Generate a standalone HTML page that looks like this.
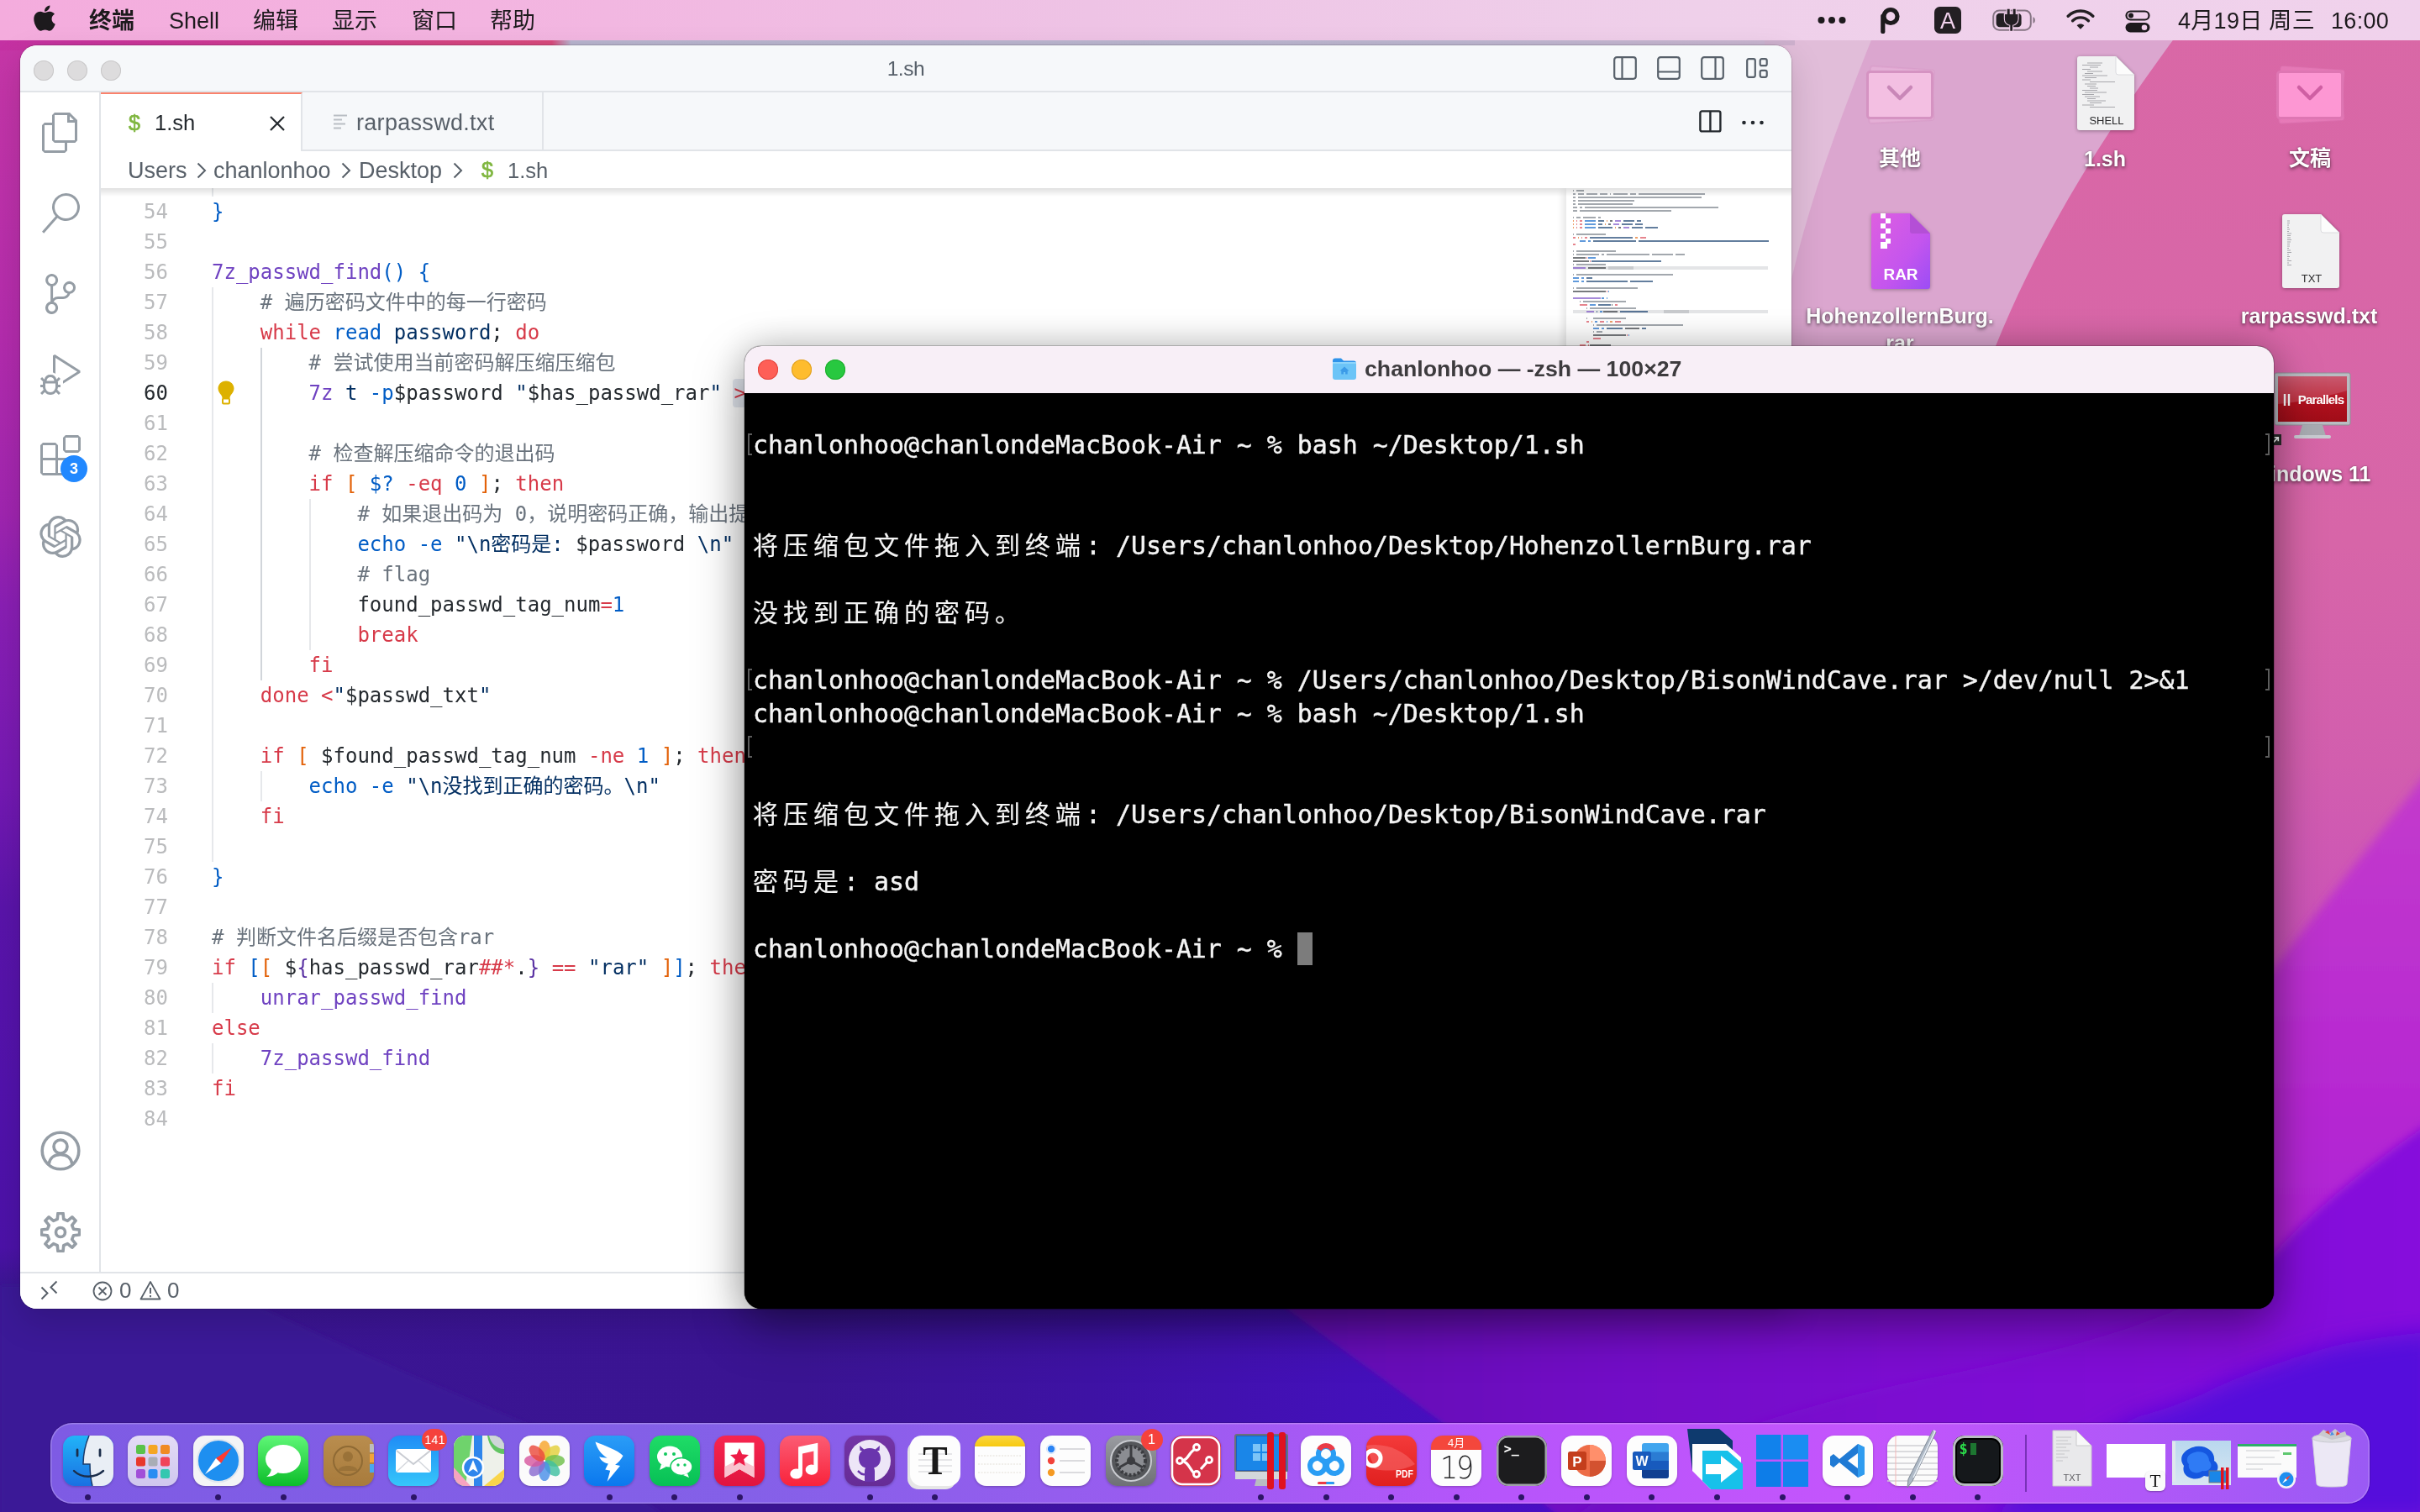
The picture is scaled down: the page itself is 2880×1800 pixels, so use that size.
<!DOCTYPE html>
<html lang="zh-CN"><head><meta charset="utf-8"><title>desktop</title>
<style>
*{box-sizing:border-box;margin:0;padding:0}
html,body{width:2880px;height:1800px;overflow:hidden;background:#3a1590}
body{position:relative;font-family:"Liberation Sans","Noto Sans CJK SC",sans-serif;-webkit-font-smoothing:antialiased}
i{font-style:normal}
#menubar,#desk,#vsc,#term,#dock{will-change:transform}

#menubar{position:absolute;left:0;top:0;width:2880px;height:48px;background:linear-gradient(90deg,#f4acdd 0%,#f3b4e0 20%,#eec3e5 45%,#efd0ea 70%,#f0d2ec 100%);}
#menubar .mi{position:absolute;top:0;height:48px;line-height:50px;font-size:27px;color:#1d1a1d;white-space:nowrap;font-family:"Liberation Sans","Noto Sans CJK SC",sans-serif}
#menubar .mi.b{font-weight:bold}

#vsc{position:absolute;left:24px;top:54px;width:2108px;height:1504px;border-radius:20px;background:#fff;overflow:hidden;box-shadow:0 0 0 1px rgba(0,0,0,.14),0 16px 40px rgba(0,0,0,.15),0 0 8px rgba(0,0,0,.05);font-family:"Liberation Sans","Noto Sans CJK SC",sans-serif}
#vsc .tbar{position:absolute;left:0;top:0;width:100%;height:56px;background:#f6f8fa;border-bottom:2px solid #e1e4e8}
#vsc .tl{position:absolute;top:18px;width:24px;height:24px;border-radius:12px;background:#dddcdd;box-shadow:inset 0 0 0 1px #c9c8c9}
#vsc .ttl{position:absolute;left:0;width:100%;text-align:center;top:0;line-height:55px;font-size:24.500px;letter-spacing:-.4px;color:#57606a}
#vsc .abar{position:absolute;left:0;top:56px;width:96px;height:1404px;background:#fff;border-right:2px solid #e1e4e8}
#vsc .badge{position:absolute;left:48px;top:432px;width:32px;height:32px;border-radius:16px;background:#2188ff;color:#fff;font-size:18px;font-weight:bold;text-align:center;line-height:32px}
#vsc .tabs{position:absolute;left:96px;top:56px;width:2012px;height:70px;background:#f6f8fa;border-bottom:2px solid #e1e4e8}
#vsc .tab{position:absolute;top:0;height:70px;border-right:2px solid #e1e4e8;border-bottom:2px solid #e1e4e8}
#vsc .tab.act{background:#fff;border-top:2px solid #f9826c;border-bottom:0}
#vsc .tn{position:absolute;top:1px;line-height:70px;font-size:27px;white-space:nowrap}
#vsc .tab.act .tn{top:-1px}
#vsc .sh{position:absolute;font-size:25px;font-weight:normal;-webkit-text-stroke:.7px #7fb63f;color:#7fb63f;line-height:34px;font-family:"Liberation Sans",sans-serif}
#vsc .bc{position:absolute;left:96px;top:126px;width:2012px;height:44px;background:#fff}
#vsc .bt{position:absolute;top:1px;line-height:45px;font-size:27px;color:#586069;white-space:nowrap}
#vsc .ed{position:absolute;left:0px;top:170px;width:2108px;height:1290px;overflow:hidden;background:transparent}
#vsc .ed .ln{position:absolute;left:0;width:2108px;height:36px;line-height:36px;font-family:"DejaVu Sans Mono","Noto Sans CJK SC",monospace;font-size:24px;white-space:pre}
#vsc .ed .ln{margin-top:-170px}
#vsc .num{position:absolute;left:96px;width:80px;text-align:right;color:#babbbd}
#vsc .num.cur{color:#24292e}
#vsc .code{position:absolute;left:228px;top:0;letter-spacing:0px}
#vsc .ig{position:absolute;top:0;width:2px;height:36px}
#vsc .edsh{position:absolute;left:96px;top:0;width:2012px;height:10px;background:linear-gradient(rgba(0,0,0,.12),rgba(0,0,0,0))}
#mini{position:absolute;left:1840px;top:0;width:244px;height:1290px;background:#fff;box-shadow:-6px 0 8px -2px rgba(0,0,0,.10)}
#mini i{position:absolute;display:block}
#mini .mm{position:absolute;left:0;top:0;width:244px;height:200px;filter:blur(.7px)}
#vsc .sbar{position:absolute;left:0;top:1460px;width:2108px;height:44px;background:#fff;border-top:2px solid #e1e4e8}
#vsc .st{position:absolute;top:0;line-height:41px;font-size:26px;color:#586069}

#term{position:absolute;left:886px;top:412px;width:1820px;height:1146px;border-radius:20px;background:#000;overflow:hidden;box-shadow:0 0 0 1px rgba(0,0,0,.20),0 22px 60px rgba(0,0,0,.34),0 0 44px rgba(0,0,0,.20);}
#term .tt{position:absolute;left:0;top:0;width:100%;height:56px;background:#f8eff7;font-family:"Liberation Sans",sans-serif}
#term .tl{position:absolute;top:16px;width:24px;height:24px;border-radius:12px}
#term .ttl{position:absolute;left:738px;top:0;line-height:55px;font-size:26.700px;font-weight:bold;color:#3d3b3e;white-space:nowrap}
#term .tb{position:absolute;left:0;top:56px;width:100%;height:1090px;background:#000}
#term .l{position:absolute;left:10px;height:40px;line-height:40px;font-family:"DejaVu Sans Mono","Noto Sans CJK SC",monospace;font-size:29.900px;color:#f4f4f4;white-space:pre;-webkit-text-stroke:.4px #f4f4f4}
#term .l b{-webkit-text-stroke:.15px #f4f4f4;font-weight:normal;display:inline-block;width:36px;text-align:left;font-size:30px}
#term .br{position:absolute;width:5px;height:26px;display:block}
#term .cur{position:absolute;width:18px;height:39px;background:#7c7c7c;display:block}

#dock{position:absolute;left:60px;top:1694px;width:2760px;height:96px;border-radius:26px;background:linear-gradient(90deg,#7e5be4 0%,#8460e8 30%,#9a5cf0 48%,#b655fb 62%,#c455fc 78%,#b058f8 90%,#9a5af4 100%);box-shadow:inset 0 0 0 1.500px rgba(255,255,255,.22),0 0 0 1px rgba(40,10,90,.25)}
#dock .dslot{position:absolute;top:15px;width:60px;height:60px}
#dock .di{position:absolute;left:0;top:0;width:60px;height:60px;border-radius:14px;overflow:hidden;box-shadow:0 1px 3px rgba(0,0,0,.25)}
#dock .di svg{position:absolute;left:0;top:0}
#dock .dot{position:absolute;top:85px;width:7px;height:7px;border-radius:4px;background:#2c1566;display:block}
#dock .sep{position:absolute;top:14px;width:2px;height:68px;background:rgba(70,20,130,.55);display:block}
#dock .bdg{position:absolute;top:-8px;height:26px;border-radius:13px;background:#f5423c;color:#fff;font-size:16px;line-height:26px;text-align:center;font-family:"Liberation Sans",sans-serif;z-index:3}

#desk .dl{position:absolute;text-align:center;font-size:25px;line-height:32px;font-weight:bold;color:#fff;text-shadow:0 2px 4px rgba(0,0,0,.55),0 0 2px rgba(0,0,0,.35);font-family:"Liberation Sans","Noto Sans CJK SC",sans-serif;white-space:nowrap}
</style></head>
<body>

<svg id="wall" width="2880" height="1800" viewBox="0 0 2880 1800" style="position:absolute;left:0;top:0">
<defs>
<filter id="b6" x="-10%" y="-10%" width="120%" height="120%"><feGaussianBlur stdDeviation="6"/></filter>
<filter id="b14" x="-10%" y="-10%" width="120%" height="120%"><feGaussianBlur stdDeviation="14"/></filter>
<filter id="b3" x="-10%" y="-10%" width="120%" height="120%"><feGaussianBlur stdDeviation="2.500"/></filter>
<linearGradient id="wbase" x1="0" y1="0" x2="0" y2="1">
<stop offset="0" stop-color="#c938a6"/>
<stop offset="0.22" stop-color="#b42cad"/>
<stop offset="0.34" stop-color="#a025b0"/>
<stop offset="0.40" stop-color="#8a1fb4"/>
<stop offset="0.52" stop-color="#7519b3"/>
<stop offset="0.60" stop-color="#5a14aa"/>
<stop offset="0.72" stop-color="#5212ac"/>
<stop offset="0.825" stop-color="#4c12a8"/>
<stop offset="0.85" stop-color="#3c1594"/>
<stop offset="1" stop-color="#3a1592"/>
</linearGradient>
<linearGradient id="wpink" x1="0" y1="0" x2="0" y2="1">
<stop offset="0" stop-color="#d968a6"/>
<stop offset="0.5" stop-color="#d765a8"/>
<stop offset="0.7" stop-color="#d25eae"/>
<stop offset="0.85" stop-color="#cc54b8"/>
<stop offset="1" stop-color="#c448c4"/>
</linearGradient>
<linearGradient id="wmag" x1="0" y1="0" x2="0" y2="1">
<stop offset="0" stop-color="#c43ccb"/>
<stop offset="0.5" stop-color="#b628d2"/>
<stop offset="1" stop-color="#a41cd8"/>
</linearGradient>
<linearGradient id="wbot" x1="0" y1="0" x2="1" y2="0">
<stop offset="0" stop-color="#3b1593"/>
<stop offset="0.33" stop-color="#3a1492"/>
<stop offset="0.45" stop-color="#3e12a4"/>
<stop offset="0.56" stop-color="#4410ba"/>
<stop offset="0.66" stop-color="#4a0ec6"/>
<stop offset="1" stop-color="#4a0ec6"/>
</linearGradient>
<linearGradient id="wpur" gradientUnits="userSpaceOnUse" x1="1500" y1="0" x2="2880" y2="0">
<stop offset="0" stop-color="#600fb0"/>
<stop offset="0.3" stop-color="#720ec6"/>
<stop offset="0.6" stop-color="#7d0fd3"/>
<stop offset="1" stop-color="#8611dc"/>
</linearGradient>
<linearGradient id="wbotv" x1="0" y1="0" x2="0" y2="1">
<stop offset="0" stop-color="#000" stop-opacity=".18"/>
<stop offset="0.5" stop-color="#000" stop-opacity="0"/>
<stop offset="1" stop-color="#fff" stop-opacity=".04"/>
</linearGradient>
<linearGradient id="wtop" x1="0" y1="0" x2="1" y2="0">
<stop offset="0" stop-color="#c431a3"/>
<stop offset="0.10" stop-color="#cf3b92"/>
<stop offset="0.20" stop-color="#d6467f"/>
<stop offset="0.228" stop-color="#d84a7c"/>
<stop offset="0.236" stop-color="#b8b4ce"/>
<stop offset="0.6" stop-color="#bdb6d0"/>
<stop offset="0.74" stop-color="#c9b4d0"/>
<stop offset="1" stop-color="#d9a8cf"/>
</linearGradient>
</defs>
<rect width="2880" height="1800" fill="url(#wbase)"/>
<rect x="0" y="0" width="2880" height="60" fill="url(#wtop)"/>
<!-- right side -->
<rect x="2100" y="0" width="780" height="1300" fill="url(#wpink)"/>
<path d="M2100 0 H2622 C2545 100 2440 250 2375 412 L2330 560 H2100 Z" fill="#dba6cf"/>
<path d="M2100 0 H2246 C2206 100 2166 200 2140 300 L2110 420 H2100 Z" fill="#e1bdd9"/>
<rect x="2100" y="46" width="36" height="8" fill="#cdb0cd"/>
<g filter="url(#b6)">
<path d="M2900 905 L2700 1160 L2560 1330 V1700 H2900 Z" fill="url(#wmag)"/>
</g>
<!-- bottom strip -->
<rect x="0" y="1530" width="2880" height="270" fill="url(#wbot)"/>
<g filter="url(#b3)">
<path d="M0 1530 H256 C400 1600 520 1650 640 1700 L800 1810 H0 Z" fill="#3d1898" fill-opacity=".7"/>
<path d="M1490 1525 H2890 V1810 H1862 L1716 1693 L1533 1559 Z" fill="url(#wpur)"/>
</g>
<g filter="url(#b6)">
<path d="M2890 1338 C2800 1400 2740 1455 2705 1494 C2620 1560 2500 1600 2300 1640 C2100 1680 1950 1740 1870 1810 H2890 Z" fill="url(#wpur)"/>
</g>
<g filter="url(#b14)">
<path d="M2900 1584 C2830 1592 2790 1598 2764 1606 C2700 1625 2660 1640 2618 1661 C2590 1672 2570 1680 2545 1686 C2480 1720 2420 1760 2360 1810 H2900 Z" fill="#5409dc"/>
</g>
</svg>
<div id="menubar"><svg style="position:absolute;left:40px;top:5px" width="26" height="33" viewBox="0 20 384 470"><path fill="#1d1a1d" d="M318.7 268.7c-.2-36.7 16.4-64.4 50-84.8-18.8-26.900-47.200-41.700-84.700-44.600-35.500-2.800-74.300 20.700-88.500 20.700-15 0-49.400-19.700-76.400-19.700C63.300 141.200 4 184.800 4 273.500q0 39.300 14.400 81.200c12.800 36.700 59 126.700 107.200 125.200 25.200-.6 43-17.900 75.800-17.900 31.800 0 48.300 17.900 76.400 17.900 48.600-.7 90.400-82.500 102.600-119.300-65.200-30.700-61.700-90-61.700-91.900zm-56.600-164.200c27.300-32.400 24.800-61.900 24-72.500-24.100 1.400-52 16.400-67.900 34.900-17.500 19.800-27.800 44.300-25.600 71.900 26.100 2 49.900-11.400 69.500-34.300z"/></svg><span class="mi b" style="left:106px">终端</span><span class="mi" style="left:201px">Shell</span><span class="mi" style="left:301px">编辑</span><span class="mi" style="left:395px">显示</span><span class="mi" style="left:490px">窗口</span><span class="mi" style="left:583px">帮助</span><svg style="position:absolute;left:2162px;top:18px" width="36" height="12" viewBox="0 0 36 12"><circle cx="5.500" cy="6" r="4" fill="#1d1a1d"/><circle cx="18" cy="6" r="4" fill="#1d1a1d"/><circle cx="30.500" cy="6" r="4" fill="#1d1a1d"/></svg><svg style="position:absolute;left:2236px;top:7px" width="28" height="34" viewBox="0 0 28 34"><circle cx="14" cy="12.500" r="8" fill="none" stroke="#1d1a1d" stroke-width="5.200"/><path d="M4.800 12 V30.500" stroke="#1d1a1d" stroke-width="5.200" stroke-linecap="round" fill="none"/></svg><div style="position:absolute;left:2302px;top:8px;width:32px;height:32px;border-radius:6.500px;background:#231f23;color:#f3d3ee;font-size:27px;line-height:34px;text-align:center;font-family:'Liberation Sans',sans-serif">A</div><svg style="position:absolute;left:2371px;top:9px" width="56" height="30" viewBox="0 0 56 30">
<rect x="1.200" y="3.400" width="44.600" height="23.300" rx="7" fill="none" stroke="#1d1a1d" stroke-opacity=".5" stroke-width="2"/>
<path d="M48.500 11.200 c3.200 1 3.200 6.600 0 7.600z" fill="#1d1a1d" fill-opacity=".5"/>
<rect x="4.600" y="6.800" width="30" height="16.500" rx="4.200" fill="#231f23"/>
<path d="M17.700 1.800 h3 v6.200 h4 v-6.200 h3 v6.200 h2.800 v5.500 c0 4.200 -3 6.800 -6.400 7.200 v7 h-2.800 v-7 c-3.400 -.4 -6.400 -3 -6.400 -7.200 v-5.500 h2.800z" fill="#231f23" stroke="#f1cfea" stroke-width="2.200" paint-order="stroke"/>
</svg><svg style="position:absolute;left:2459px;top:10px" width="34" height="26" viewBox="0 0 34 26">
<path d="M2.200 9.200 C10.400 1 23.600 1 31.800 9.200" fill="none" stroke="#231f23" stroke-width="3.400" stroke-linecap="round"/>
<path d="M7.600 14.800 C12.800 9.600 21.200 9.600 26.400 14.800" fill="none" stroke="#231f23" stroke-width="3.400" stroke-linecap="round"/>
<path d="M12.600 20.200 C15 17.800 19 17.800 21.400 20.200 L17 24.800 Z" fill="#231f23"/>
</svg><svg style="position:absolute;left:2529px;top:12px" width="30" height="27" viewBox="0 0 30 27">
<rect x="1.500" y="1.500" width="27" height="10" rx="5" fill="none" stroke="#1d1a1d" stroke-width="2.200"/>
<circle cx="7" cy="6.500" r="3" fill="#1d1a1d"/>
<rect x="0.500" y="15" width="29" height="11.500" rx="5.750" fill="#1d1a1d"/>
<circle cx="23" cy="20.750" r="3.300" fill="#f1cfea"/>
</svg><span class="mi" style="left:2592px;letter-spacing:0.3px">4月19日 周三</span><span class="mi" style="left:2774px;letter-spacing:0.3px">16:00</span></div>
<div id="desk"><svg style="position:absolute;left:2215px;top:76px" width="92" height="80" viewBox="-6 -8 92 80">
<rect x="3" y="-3" width="76" height="56" rx="3" fill="#f3bfe2" fill-opacity=".35" stroke="#d593c2" stroke-opacity=".35" stroke-width="2" transform="rotate(4 40 28)"/>
<rect x="2" y="4" width="77" height="57" rx="3" fill="#f3bfe2" fill-opacity=".4" stroke="#d593c2" stroke-opacity=".4" stroke-width="2" transform="rotate(-3 40 30)"/>
<rect x="1.500" y="1.500" width="77" height="55" rx="3" fill="#f3bfe2" stroke="#d593c2" stroke-width="3"/>
<path d="M27 20L40 33L53 20" fill="none" stroke="#c987b8" stroke-width="4.500" stroke-linecap="round" stroke-linejoin="round"/></svg><div class="dl" style="left:2111.0px;top:172px;width:300px">其他</div><svg style="position:absolute;left:2703px;top:76px" width="92" height="80" viewBox="-6 -8 92 80">
<rect x="3" y="-3" width="76" height="56" rx="3" fill="#fd97d3" fill-opacity=".35" stroke="#de76b3" stroke-opacity=".35" stroke-width="2" transform="rotate(4 40 28)"/>
<rect x="2" y="4" width="77" height="57" rx="3" fill="#fd97d3" fill-opacity=".4" stroke="#de76b3" stroke-opacity=".4" stroke-width="2" transform="rotate(-3 40 30)"/>
<rect x="1.500" y="1.500" width="77" height="55" rx="3" fill="#fd97d3" stroke="#de76b3" stroke-width="3"/>
<path d="M27 20L40 33L53 20" fill="none" stroke="#cf5fa3" stroke-width="4.500" stroke-linecap="round" stroke-linejoin="round"/></svg><div class="dl" style="left:2599.0px;top:172px;width:300px">文稿</div><svg style="position:absolute;left:2472.0px;top:67px;filter:drop-shadow(0 1px 2px rgba(0,0,0,.35))" width="68" height="88" viewBox="0 0 68 88">
<path d="M3 0H46L68 22V85A3 3 0 0 1 65 88H3A3 3 0 0 1 0 85V3A3 3 0 0 1 3 0Z" fill="#f1f1f2"/>
<path d="M46 0L68 22H49A3 3 0 0 1 46 19Z" fill="#fcfcfc" stroke="#d4d4d8" stroke-width=".8"/>
<path d="M12 8H30" stroke="#77777d" stroke-width="1" stroke-opacity=".6"/><path d="M6 10.5H28" stroke="#77777d" stroke-width="1" stroke-opacity=".6"/><path d="M15 13.0H25" stroke="#77777d" stroke-width="1" stroke-opacity=".6"/><path d="M6 15.5H16" stroke="#77777d" stroke-width="1" stroke-opacity=".6"/><path d="M12 18.0H30" stroke="#77777d" stroke-width="1" stroke-opacity=".6"/><path d="M9 20.5H19" stroke="#77777d" stroke-width="1" stroke-opacity=".6"/><path d="M6 23.0H36" stroke="#77777d" stroke-width="1" stroke-opacity=".6"/><path d="M9 25.5H23" stroke="#77777d" stroke-width="1" stroke-opacity=".6"/><path d="M6 28.0H16" stroke="#77777d" stroke-width="1" stroke-opacity=".6"/><path d="M15 30.5H45" stroke="#77777d" stroke-width="1" stroke-opacity=".6"/><path d="M9 33.0H23" stroke="#77777d" stroke-width="1" stroke-opacity=".6"/><path d="M12 35.5H22" stroke="#77777d" stroke-width="1" stroke-opacity=".6"/><path d="M15 38.0H25" stroke="#77777d" stroke-width="1" stroke-opacity=".6"/><path d="M6 40.5H24" stroke="#77777d" stroke-width="1" stroke-opacity=".6"/><path d="M9 43.0H35" stroke="#77777d" stroke-width="1" stroke-opacity=".6"/><path d="M6 45.5H20" stroke="#77777d" stroke-width="1" stroke-opacity=".6"/><path d="M9 48.0H27" stroke="#77777d" stroke-width="1" stroke-opacity=".6"/><path d="M12 50.5H22" stroke="#77777d" stroke-width="1" stroke-opacity=".6"/><path d="M12 53.0H34" stroke="#77777d" stroke-width="1" stroke-opacity=".6"/><path d="M15 55.5H29" stroke="#77777d" stroke-width="1" stroke-opacity=".6"/><path d="M6 58.0H20" stroke="#77777d" stroke-width="1" stroke-opacity=".6"/><path d="M15 60.5H45" stroke="#77777d" stroke-width="1" stroke-opacity=".6"/>
<text x="35.0" y="81" font-size="13" fill="#2a2a2c" text-anchor="middle" font-family="Liberation Sans,sans-serif">SHELL</text></svg><div class="dl" style="left:2355.0px;top:173px;width:300px">1.sh</div><svg style="position:absolute;left:2716.0px;top:255px;filter:drop-shadow(0 1px 2px rgba(0,0,0,.35))" width="68" height="88" viewBox="0 0 68 88">
<path d="M3 0H46L68 22V85A3 3 0 0 1 65 88H3A3 3 0 0 1 0 85V3A3 3 0 0 1 3 0Z" fill="#f1f1f2"/>
<path d="M46 0L68 22H49A3 3 0 0 1 46 19Z" fill="#fcfcfc" stroke="#d4d4d8" stroke-width=".8"/>
<path d="M6 8H9" stroke="#77777d" stroke-width="1" stroke-opacity=".6"/><path d="M6 10.5H9" stroke="#77777d" stroke-width="1" stroke-opacity=".6"/><path d="M6 13.0H8" stroke="#77777d" stroke-width="1" stroke-opacity=".6"/><path d="M6 15.5H8" stroke="#77777d" stroke-width="1" stroke-opacity=".6"/><path d="M6 18.0H9" stroke="#77777d" stroke-width="1" stroke-opacity=".6"/><path d="M6 20.5H8" stroke="#77777d" stroke-width="1" stroke-opacity=".6"/><path d="M6 23.0H11" stroke="#77777d" stroke-width="1" stroke-opacity=".6"/><path d="M6 25.5H10" stroke="#77777d" stroke-width="1" stroke-opacity=".6"/><path d="M6 28.0H10" stroke="#77777d" stroke-width="1" stroke-opacity=".6"/><path d="M6 30.5H11" stroke="#77777d" stroke-width="1" stroke-opacity=".6"/><path d="M6 33.0H10" stroke="#77777d" stroke-width="1" stroke-opacity=".6"/><path d="M6 35.5H9" stroke="#77777d" stroke-width="1" stroke-opacity=".6"/><path d="M6 38.0H9" stroke="#77777d" stroke-width="1" stroke-opacity=".6"/><path d="M6 40.5H8" stroke="#77777d" stroke-width="1" stroke-opacity=".6"/><path d="M6 43.0H10" stroke="#77777d" stroke-width="1" stroke-opacity=".6"/><path d="M6 45.5H11" stroke="#77777d" stroke-width="1" stroke-opacity=".6"/><path d="M6 48.0H8" stroke="#77777d" stroke-width="1" stroke-opacity=".6"/><path d="M6 50.5H9" stroke="#77777d" stroke-width="1" stroke-opacity=".6"/><path d="M6 53.0H8" stroke="#77777d" stroke-width="1" stroke-opacity=".6"/><path d="M6 55.5H11" stroke="#77777d" stroke-width="1" stroke-opacity=".6"/><path d="M6 58.0H8" stroke="#77777d" stroke-width="1" stroke-opacity=".6"/><path d="M6 60.5H11" stroke="#77777d" stroke-width="1" stroke-opacity=".6"/>
<text x="35.0" y="80.5" font-size="13" fill="#2a2a2c" text-anchor="middle" font-family="Liberation Sans,sans-serif">TXT</text></svg><div class="dl" style="left:2598.0px;top:360px;width:300px">rarpasswd.txt</div><svg style="position:absolute;left:2227px;top:254px;filter:drop-shadow(0 1px 2px rgba(0,0,0,.3))" width="70" height="90" viewBox="0 0 70 90">
<defs><linearGradient id="rarg" x1="0" y1="0" x2="1" y2="1"><stop offset="0" stop-color="#de5fe0"/><stop offset=".6" stop-color="#c455ee"/><stop offset="1" stop-color="#9b4df5"/></linearGradient></defs>
<path d="M3 0H46L70 24V87A3 3 0 0 1 67 90H3A3 3 0 0 1 0 87V3A3 3 0 0 1 3 0Z" fill="url(#rarg)"/>
<path d="M46 0L70 24H49A3 3 0 0 1 46 21Z" fill="#b44fd6"/>
<path d="M11 0h6v6h-6zM17 6h6v6h-6zM11 12h6v6h-6zM17 18h6v6h-6zM11 24h6v6h-6zM17 30h6v6h-6zM11 34h8v8h-8z" fill="#fff"/>
<text x="35" y="79" font-size="19" font-weight="bold" fill="#fff" text-anchor="middle" font-family="Liberation Sans,sans-serif">RAR</text></svg><div class="dl" style="left:2111.0px;top:360px;width:300px">HohenzollernBurg.<br>rar</div><svg style="position:absolute;left:2706px;top:443px" width="92" height="86" viewBox="0 0 92 86">
<defs><linearGradient id="parg" x1="0" y1="0" x2="0" y2="1"><stop offset="0" stop-color="#c2475f"/><stop offset=".5" stop-color="#b3111f"/><stop offset="1" stop-color="#a00d18"/></linearGradient></defs>
<rect x="1" y="1" width="90" height="62" rx="2" fill="#b9bcc2" stroke="#8d9096" stroke-width="1"/>
<rect x="5" y="5" width="82" height="54" fill="url(#parg)"/>
<path d="M5 5H87V22C60 30 30 36 5 38Z" fill="#d8798c" fill-opacity=".35"/>
<path d="M34 63H58L62 76H30Z" fill="#a9acb2"/><rect x="24" y="75" width="44" height="4" rx="2" fill="#c9ccd2"/>
<path d="M13 26V40M18 26V40" stroke="#fff" stroke-width="2.400"/>
<text x="56" y="38" font-size="15" font-weight="bold" fill="#fff" text-anchor="middle" font-family="Liberation Sans,sans-serif" letter-spacing="-0.800">Parallels</text></svg><svg style="position:absolute;left:2702px;top:517px" width="13" height="13" viewBox="0 0 14 14"><rect width="14" height="14" fill="#2b2b2b"/><path d="M4 10L10 4M5 4H10V9" stroke="#fff" stroke-width="1.800" fill="none"/></svg><div class="dl" style="left:2600.0px;top:548px;width:300px">Windows 11</div></div>
<div id="vsc"><div class="tbar"><span class="tl" style="left:16px"></span><span class="tl" style="left:56px"></span><span class="tl" style="left:96px"></span><span class="ttl">1.sh</span><svg style="position:absolute;left:1896px;top:13px" width="28" height="28" viewBox="0 0 28 28"><rect x="1.200" y="1.200" width="25.600" height="25.600" rx="3" fill="none" stroke="#57606a" stroke-width="2.200"/><path d="M10.500 1V27" stroke="#57606a" stroke-width="2.200"/></svg><svg style="position:absolute;left:1948px;top:13px" width="28" height="28" viewBox="0 0 28 28"><rect x="1.200" y="1.200" width="25.600" height="25.600" rx="3" fill="none" stroke="#57606a" stroke-width="2.200"/><path d="M1 18.500H27" stroke="#57606a" stroke-width="2.200"/></svg><svg style="position:absolute;left:2000px;top:13px" width="28" height="28" viewBox="0 0 28 28"><rect x="1.200" y="1.200" width="25.600" height="25.600" rx="3" fill="none" stroke="#57606a" stroke-width="2.200"/><path d="M17.500 1V27" stroke="#57606a" stroke-width="2.200"/></svg><svg style="position:absolute;left:2053px;top:14px" width="28" height="26" viewBox="0 0 28 26"><rect x="2.200" y="2.200" width="9.600" height="21.600" rx="2" fill="none" stroke="#57606a" stroke-width="2.200"/><rect x="17.700" y="2.200" width="8" height="8" rx="2" fill="none" stroke="#57606a" stroke-width="2.200"/><rect x="17.700" y="15.800" width="8" height="8" rx="2" fill="none" stroke="#57606a" stroke-width="2.200"/></svg></div><div class="abar"><div style="position:absolute;left:24.0px;top:24.0px;width:48px;height:48px"><svg width="48" height="48" viewBox="0 0 24 24" style=""><path fill="#959da5" d="M17.5 0h-9L7 1.500V6H2.500L1 7.500v15.070L2.500 24h12.070L16 22.570V18h4.700l1.300-1.430V4.500L17.500 0zm0 2.120l2.380 2.380H17.500V2.120zm-3 20.380h-12v-15H7v9.070L8.500 18h6v4.500zm6-6h-12v-15H16V6h4.500v10.500z"/></svg></div><div style="position:absolute;left:24.0px;top:120.0px;width:48px;height:48px"><svg width="48" height="48" viewBox="0 0 24 24" style=""><path fill="#959da5" d="M15.250 0a8.250 8.250 0 0 0-6.180 13.720L1 22.880l1.120 1 8.050-9.120A8.251 8.251 0 1 0 15.250.010V0zm0 15a6.750 6.750 0 1 1 0-13.500 6.750 6.750 0 0 1 0 13.500z"/></svg></div><div style="position:absolute;left:24.0px;top:216.0px;width:48px;height:48px"><svg width="48" height="48" viewBox="0 0 24 24" style=""><path fill="#959da5" d="M21.007 8.222A3.738 3.738 0 0 0 15.045 5.200a3.737 3.737 0 0 0 1.156 6.583 2.988 2.988 0 0 1-2.668 1.670h-2.990a4.456 4.456 0 0 0-2.989 1.165V7.400a3.737 3.737 0 1 0-1.494 0v9.117a3.776 3.776 0 1 0 1.816.099 2.990 2.990 0 0 1 2.668-1.667h2.990a4.484 4.484 0 0 0 4.223-3.039 3.736 3.736 0 0 0 3.250-3.687zM4.565 3.738a2.242 2.242 0 1 1 4.484 0 2.242 2.242 0 0 1-4.484 0zm4.484 16.441a2.242 2.242 0 1 1-4.484 0 2.242 2.242 0 0 1 4.484 0zm8.221-9.715a2.242 2.242 0 1 1 0-4.485 2.242 2.242 0 0 1 0 4.485z"/></svg></div><div style="position:absolute;left:24.0px;top:312.0px;width:48px;height:48px"><svg width="48" height="48" viewBox="0 0 24 24" style=""><path fill="#959da5" d="M10.940 13.500l-1.320 1.320a3.730 3.730 0 0 0-7.240 0L1.060 13.500 0 14.560l1.720 1.720-.220.220V18H0v1.500h1.500v.080c.077.489.214.966.410 1.420L0 22.940 1.060 24l1.650-1.650A4.308 4.308 0 0 0 6 24a4.310 4.310 0 0 0 3.290-1.650L10.940 24 12 22.940 10.090 21c.198-.464.336-.951.410-1.450v-.100H12V18h-1.500v-1.500l-.220-.220L12 14.560l-1.060-1.060zM6 13.500a2.250 2.250 0 0 1 2.250 2.250h-4.500A2.250 2.250 0 0 1 6 13.500zm3 6a3.330 3.330 0 0 1-3 3 3.330 3.330 0 0 1-3-3v-2.250h6v2.250zm14.760-9.900v1.260L13.500 17.370V15.600l8.500-5.370L9 2v9.460a5.070 5.070 0 0 0-1.500-.720V.630L8.640 0l15.120 9.600z"/></svg></div><div style="position:absolute;left:24.0px;top:408.0px;width:48px;height:48px"><svg width="48" height="48" viewBox="0 0 24 24" style=""><path fill="#959da5" d="M13.500 1.500L15 0h7.500L24 1.500V9l-1.500 1.500H15L13.500 9V1.500zm1.500 0V9h7.500V1.500H15zM0 15V6l1.500-1.500H9L10.500 6v7.500H18l1.500 1.500v7.500L18 24H1.500L0 22.500V15zm9-1.500V6H1.500v7.500H9zM9 15H1.500v7.500H9V15zm1.500 7.500H18V15h-7.500v7.500z"/></svg></div><div class="badge">3</div><div style="position:absolute;left:23.0px;top:504.0px;width:50px;height:50px"><svg width="50" height="50" viewBox="0 0 24 24" style=""><path fill="#959da5" d="M22.2819 9.8211a5.9847 5.9847 0 0 0-.5157-4.9108 6.0462 6.0462 0 0 0-6.5098-2.9A6.0651 6.0651 0 0 0 4.9807 4.1818a5.9847 5.9847 0 0 0-3.9977 2.9 6.0462 6.0462 0 0 0 .7427 7.0966 5.98 5.98 0 0 0 .511 4.9107 6.051 6.051 0 0 0 6.5146 2.9001A5.9847 5.9847 0 0 0 13.2599 24a6.0557 6.0557 0 0 0 5.7718-4.2058 5.9894 5.9894 0 0 0 3.9977-2.9001 6.0557 6.0557 0 0 0-.7475-7.0729zm-9.022 12.6081a4.4755 4.4755 0 0 1-2.8764-1.0408l.1419-.0804 4.7783-2.7582a.7948.7948 0 0 0 .3927-.6813v-6.7369l2.02 1.1686a.071.071 0 0 1 .038.052v5.5826a4.504 4.504 0 0 1-4.4945 4.4944zm-9.6607-4.1254a4.4708 4.4708 0 0 1-.5346-3.0137l.142.0852 4.783 2.7582a.7712.7712 0 0 0 .7806 0l5.8428-3.3685v2.3324a.0804.0804 0 0 1-.0332.0615L9.74 19.9502a4.4992 4.4992 0 0 1-6.1408-1.6464zM2.3408 7.8956a4.485 4.485 0 0 1 2.3655-1.9728V11.6a.7664.7664 0 0 0 .3879.6765l5.8144 3.3543-2.0201 1.1685a.0757.0757 0 0 1-.071 0l-4.8303-2.7865A4.504 4.504 0 0 1 2.3408 7.872zm16.5963 3.8558L13.1038 8.364 15.1192 7.2a.0757.0757 0 0 1 .071 0l4.8303 2.7913a4.4944 4.4944 0 0 1-.6765 8.1042v-5.6772a.79.79 0 0 0-.407-.667zm2.0107-3.0231l-.142-.0852-4.7735-2.7818a.7759.7759 0 0 0-.7854 0L9.409 9.2297V6.8974a.0662.0662 0 0 1 .0284-.0615l4.8303-2.7866a4.4992 4.4992 0 0 1 6.6802 4.66zM8.3065 12.863l-2.02-1.1638a.0804.0804 0 0 1-.038-.0567V6.0742a4.4992 4.4992 0 0 1 7.3757-3.4537l-.142.0805L8.704 5.459a.7948.7948 0 0 0-.3927.6813zm1.0976-2.3654l2.602-1.4998 2.6069 1.4998v2.9994l-2.5974 1.4997-2.6067-1.4997Z"/></svg></div><div style="position:absolute;left:24.0px;top:1236.0px;width:48px;height:48px"><svg width="48" height="48" viewBox="0 0 48 48"><circle cx="24" cy="24" r="21.800" fill="none" stroke="#959da5" stroke-width="3.600"/><circle cx="24" cy="19" r="8" fill="none" stroke="#959da5" stroke-width="3.600"/><path d="M10 40.500 C11 32 17 28.500 24 28.500 S37 32 38 40.500" fill="none" stroke="#959da5" stroke-width="3.600"/></svg></div><div style="position:absolute;left:24.0px;top:1333.0px;width:48px;height:48px"><svg width="48" height="48" viewBox="0 0 48 48"><path d="M20.26 8.44 L20.96 1.40 L27.04 1.40 L27.74 8.44 L32.36 10.36 L37.83 5.88 L42.12 10.17 L37.64 15.64 L39.56 20.26 L46.60 20.96 L46.60 27.04 L39.56 27.74 L37.64 32.36 L42.12 37.83 L37.83 42.12 L32.36 37.64 L27.74 39.56 L27.04 46.60 L20.96 46.60 L20.26 39.56 L15.64 37.64 L10.17 42.12 L5.88 37.83 L10.36 32.36 L8.44 27.74 L1.40 27.04 L1.40 20.96 L8.44 20.26 L10.36 15.64 L5.88 10.17 L10.17 5.88 L15.64 10.36 Z" fill="none" stroke="#959da5" stroke-width="3.6" stroke-linejoin="round"/><circle cx="24" cy="24" r="5.5" fill="none" stroke="#959da5" stroke-width="3.6"/></svg></div></div><div class="tabs"><div class="tab act" style="left:0;width:240px"><span class="sh" style="left:33px;top:17px">$</span><span class="tn" style="left:64px;color:#24292e;font-size:25.500px">1.sh</span><svg style="position:absolute;left:201px;top:26px" width="18" height="18" viewBox="0 0 18 18"><path d="M1 1L17 17M17 1L1 17" stroke="#24292e" stroke-width="2.200" fill="none"/></svg></div><div class="tab" style="left:240px;width:287px"><svg style="position:absolute;left:37px;top:26px" width="18" height="18" viewBox="0 0 18 18"><path d="M0 1.500H16M0 6.500H10M0 11.500H14M0 16.500H9" stroke="#b9bec4" stroke-width="2" fill="none"/></svg><span class="tn" style="left:64px;color:#586069;letter-spacing:.3px">rarpasswd.txt</span></div><svg style="position:absolute;left:1902px;top:21px" width="28" height="28" viewBox="0 0 28 28"><rect x="1.400" y="1.400" width="24" height="24" rx="2" fill="none" stroke="#24292e" stroke-width="2.400"/><path d="M13.400 1V26" stroke="#24292e" stroke-width="2.400"/></svg><svg style="position:absolute;left:1952px;top:32px" width="30" height="8" viewBox="0 0 30 8"><circle cx="3.500" cy="4" r="2.300" fill="#24292e"/><circle cx="14" cy="4" r="2.300" fill="#24292e"/><circle cx="24.500" cy="4" r="2.300" fill="#24292e"/></svg></div><div class="bc"><span class="bt" style="left:32px">Users</span><svg style="position:absolute;left:114px;top:13px" width="12" height="20" viewBox="0 0 12 20"><path d="M1.500 1.500L10 10L1.500 18.500" fill="none" stroke="#586069" stroke-width="2"/></svg><span class="bt" style="left:134px">chanlonhoo</span><svg style="position:absolute;left:286px;top:13px" width="12" height="20" viewBox="0 0 12 20"><path d="M1.500 1.500L10 10L1.500 18.500" fill="none" stroke="#586069" stroke-width="2"/></svg><span class="bt" style="left:307px">Desktop</span><svg style="position:absolute;left:419px;top:13px" width="12" height="20" viewBox="0 0 12 20"><path d="M1.500 1.500L10 10L1.500 18.500" fill="none" stroke="#586069" stroke-width="2"/></svg><span class="sh" style="left:453px;top:5px">$</span><span class="bt" style="left:484px;font-size:25.500px">1.sh</span></div><div class="ed"><i style="position:absolute;left:848px;top:227px;width:16px;height:34px;border-radius:4px;background:#e4e8f0;display:block"></i><div class="ln" style="top:144px"><i class="ig" style="left:228.0px;background:#e6e8eb"></i></div><div class="ln" style="top:180px"><span class="num">54</span><span class="code"><span style="color:#005cc5">}</span></span></div><div class="ln" style="top:216px"><span class="num">55</span></div><div class="ln" style="top:252px"><span class="num">56</span><span class="code"><span style="color:#6f42c1">7z_passwd_find</span><span style="color:#005cc5">()</span><span style="color:#24292e"> </span><span style="color:#005cc5">{</span></span></div><div class="ln" style="top:288px"><i class="ig" style="left:228.0px;background:#e6e8eb"></i><span class="num">57</span><span class="code">    <span style="color:#6a737d"># 遍历密码文件中的每一行密码</span></span></div><div class="ln" style="top:324px"><i class="ig" style="left:228.0px;background:#e6e8eb"></i><span class="num">58</span><span class="code">    <span style="color:#d73a49">while</span><span style="color:#24292e"> </span><span style="color:#005cc5">read</span><span style="color:#24292e"> </span><span style="color:#032f62">password</span><span style="color:#24292e">;</span><span style="color:#24292e"> </span><span style="color:#d73a49">do</span></span></div><div class="ln" style="top:360px"><i class="ig" style="left:228.0px;background:#e6e8eb"></i><i class="ig" style="left:285.8px;background:#d1d5da"></i><span class="num">59</span><span class="code">        <span style="color:#6a737d"># 尝试使用当前密码解压缩压缩包</span></span></div><div class="ln" style="top:396px"><i class="ig" style="left:228.0px;background:#e6e8eb"></i><i class="ig" style="left:285.8px;background:#d1d5da"></i><span class="num cur">60</span><span class="code">        <span style="color:#6f42c1">7z</span><span style="color:#032f62"> t </span><span style="color:#005cc5">-p</span><span style="color:#24292e">$password</span><span style="color:#24292e"> </span><span style="color:#032f62">"</span><span style="color:#24292e">$has_passwd_rar</span><span style="color:#032f62">"</span><span style="color:#24292e"> </span><span style="color:#d73a49">&gt;</span><span style="color:#032f62">/dev/null </span><span style="color:#d73a49">2&gt;&amp;1</span></span></div><div class="ln" style="top:432px"><i class="ig" style="left:228.0px;background:#e6e8eb"></i><i class="ig" style="left:285.8px;background:#d1d5da"></i><span class="num">61</span></div><div class="ln" style="top:468px"><i class="ig" style="left:228.0px;background:#e6e8eb"></i><i class="ig" style="left:285.8px;background:#d1d5da"></i><span class="num">62</span><span class="code">        <span style="color:#6a737d"># 检查解压缩命令的退出码</span></span></div><div class="ln" style="top:504px"><i class="ig" style="left:228.0px;background:#e6e8eb"></i><i class="ig" style="left:285.8px;background:#d1d5da"></i><span class="num">63</span><span class="code">        <span style="color:#d73a49">if</span><span style="color:#24292e"> </span><span style="color:#e36209">[</span><span style="color:#24292e"> </span><span style="color:#005cc5">$?</span><span style="color:#24292e"> </span><span style="color:#d73a49">-eq</span><span style="color:#24292e"> </span><span style="color:#005cc5">0</span><span style="color:#24292e"> </span><span style="color:#e36209">]</span><span style="color:#24292e">;</span><span style="color:#24292e"> </span><span style="color:#d73a49">then</span></span></div><div class="ln" style="top:540px"><i class="ig" style="left:228.0px;background:#e6e8eb"></i><i class="ig" style="left:285.8px;background:#d1d5da"></i><i class="ig" style="left:343.6px;background:#e6e8eb"></i><span class="num">64</span><span class="code">            <span style="color:#6a737d"># 如果退出码为 0，说明密码正确，输出提示信息并退出循环</span></span></div><div class="ln" style="top:576px"><i class="ig" style="left:228.0px;background:#e6e8eb"></i><i class="ig" style="left:285.8px;background:#d1d5da"></i><i class="ig" style="left:343.6px;background:#e6e8eb"></i><span class="num">65</span><span class="code">            <span style="color:#005cc5">echo</span><span style="color:#24292e"> </span><span style="color:#005cc5">-e</span><span style="color:#24292e"> </span><span style="color:#032f62">"\n密码是: </span><span style="color:#24292e">$password</span><span style="color:#032f62"> \n"</span></span></div><div class="ln" style="top:612px"><i class="ig" style="left:228.0px;background:#e6e8eb"></i><i class="ig" style="left:285.8px;background:#d1d5da"></i><i class="ig" style="left:343.6px;background:#e6e8eb"></i><span class="num">66</span><span class="code">            <span style="color:#6a737d"># flag</span></span></div><div class="ln" style="top:648px"><i class="ig" style="left:228.0px;background:#e6e8eb"></i><i class="ig" style="left:285.8px;background:#d1d5da"></i><i class="ig" style="left:343.6px;background:#e6e8eb"></i><span class="num">67</span><span class="code">            <span style="color:#24292e">found_passwd_tag_num</span><span style="color:#d73a49">=</span><span style="color:#005cc5">1</span></span></div><div class="ln" style="top:684px"><i class="ig" style="left:228.0px;background:#e6e8eb"></i><i class="ig" style="left:285.8px;background:#d1d5da"></i><i class="ig" style="left:343.6px;background:#e6e8eb"></i><span class="num">68</span><span class="code">            <span style="color:#d73a49">break</span></span></div><div class="ln" style="top:720px"><i class="ig" style="left:228.0px;background:#e6e8eb"></i><i class="ig" style="left:285.8px;background:#d1d5da"></i><span class="num">69</span><span class="code">        <span style="color:#d73a49">fi</span></span></div><div class="ln" style="top:756px"><i class="ig" style="left:228.0px;background:#e6e8eb"></i><span class="num">70</span><span class="code">    <span style="color:#d73a49">done</span><span style="color:#24292e"> </span><span style="color:#d73a49">&lt;</span><span style="color:#032f62">"</span><span style="color:#24292e">$passwd_txt</span><span style="color:#032f62">"</span></span></div><div class="ln" style="top:792px"><i class="ig" style="left:228.0px;background:#e6e8eb"></i><span class="num">71</span></div><div class="ln" style="top:828px"><i class="ig" style="left:228.0px;background:#e6e8eb"></i><span class="num">72</span><span class="code">    <span style="color:#d73a49">if</span><span style="color:#24292e"> </span><span style="color:#e36209">[</span><span style="color:#24292e"> </span><span style="color:#24292e">$found_passwd_tag_num</span><span style="color:#24292e"> </span><span style="color:#d73a49">-ne</span><span style="color:#24292e"> </span><span style="color:#005cc5">1</span><span style="color:#24292e"> </span><span style="color:#e36209">]</span><span style="color:#24292e">;</span><span style="color:#24292e"> </span><span style="color:#d73a49">then</span></span></div><div class="ln" style="top:864px"><i class="ig" style="left:228.0px;background:#e6e8eb"></i><i class="ig" style="left:285.8px;background:#e6e8eb"></i><span class="num">73</span><span class="code">        <span style="color:#005cc5">echo</span><span style="color:#24292e"> </span><span style="color:#005cc5">-e</span><span style="color:#24292e"> </span><span style="color:#032f62">"\n没找到正确的密码。\n"</span></span></div><div class="ln" style="top:900px"><i class="ig" style="left:228.0px;background:#e6e8eb"></i><span class="num">74</span><span class="code">    <span style="color:#d73a49">fi</span></span></div><div class="ln" style="top:936px"><i class="ig" style="left:228.0px;background:#e6e8eb"></i><span class="num">75</span></div><div class="ln" style="top:972px"><span class="num">76</span><span class="code"><span style="color:#005cc5">}</span></span></div><div class="ln" style="top:1008px"><span class="num">77</span></div><div class="ln" style="top:1044px"><span class="num">78</span><span class="code"><span style="color:#6a737d"># 判断文件名后缀是否包含rar</span></span></div><div class="ln" style="top:1080px"><span class="num">79</span><span class="code"><span style="color:#d73a49">if</span><span style="color:#24292e"> </span><span style="color:#005cc5">[</span><span style="color:#e36209">[</span><span style="color:#24292e"> </span><span style="color:#24292e">$</span><span style="color:#5a32a3">{</span><span style="color:#24292e">has_passwd_rar</span><span style="color:#d73a49">##*</span><span style="color:#24292e">.</span><span style="color:#5a32a3">}</span><span style="color:#24292e"> </span><span style="color:#d73a49">==</span><span style="color:#24292e"> </span><span style="color:#032f62">"rar"</span><span style="color:#24292e"> </span><span style="color:#e36209">]</span><span style="color:#005cc5">]</span><span style="color:#24292e">;</span><span style="color:#24292e"> </span><span style="color:#d73a49">then</span></span></div><div class="ln" style="top:1116px"><i class="ig" style="left:228.0px;background:#e6e8eb"></i><span class="num">80</span><span class="code">    <span style="color:#6f42c1">unrar_passwd_find</span></span></div><div class="ln" style="top:1152px"><span class="num">81</span><span class="code"><span style="color:#d73a49">else</span></span></div><div class="ln" style="top:1188px"><i class="ig" style="left:228.0px;background:#e6e8eb"></i><span class="num">82</span><span class="code">    <span style="color:#6f42c1">7z_passwd_find</span></span></div><div class="ln" style="top:1224px"><span class="num">83</span><span class="code"><span style="color:#d73a49">fi</span></span></div><div class="ln" style="top:1260px"><span class="num">84</span></div><svg style="position:absolute;left:234px;top:228px" width="22" height="30" viewBox="0 0 22 30"><path d="M11 1.500 C5 1.500 1.500 6 1.500 10.500 C1.500 14 3.500 16 5 18 C6 19.500 6.500 20.500 6.500 22 H15.500 C15.500 20.500 16 19.500 17 18 C18.500 16 20.500 14 20.500 10.500 C20.500 6 17 1.500 11 1.500Z" fill="#ddb100"/><rect x="7" y="22.500" width="8" height="6" rx="1" fill="#fff" stroke="#ddb100" stroke-width="2"/></svg><div id="mini"><div class="mm"><i style="left:8.0px;top:1.8px;width:1.4px;height:2px;background:#6a737d;opacity:.62"></i><i style="left:12.0px;top:1.8px;width:9.4px;height:2px;background:#6a737d;opacity:.62"></i><i style="left:8.0px;top:5.8px;width:3.4px;height:2px;background:#6a737d;opacity:.62"></i><i style="left:14.0px;top:5.8px;width:7.4px;height:2px;background:#6a737d;opacity:.62"></i><i style="left:24.0px;top:5.8px;width:13.4px;height:2px;background:#6a737d;opacity:.62"></i><i style="left:40.0px;top:5.8px;width:9.4px;height:2px;background:#6a737d;opacity:.62"></i><i style="left:52.0px;top:5.8px;width:1.4px;height:2px;background:#6a737d;opacity:.62"></i><i style="left:56.0px;top:5.8px;width:17.4px;height:2px;background:#6a737d;opacity:.62"></i><i style="left:76.0px;top:5.8px;width:7.4px;height:2px;background:#6a737d;opacity:.62"></i><i style="left:86.0px;top:5.8px;width:79.4px;height:2px;background:#6a737d;opacity:.62"></i><i style="left:8.0px;top:9.8px;width:3.4px;height:2px;background:#6a737d;opacity:.62"></i><i style="left:14.0px;top:9.8px;width:147.4px;height:2px;background:#6a737d;opacity:.62"></i><i style="left:8.0px;top:13.8px;width:3.4px;height:2px;background:#6a737d;opacity:.62"></i><i style="left:14.0px;top:13.8px;width:67.4px;height:2px;background:#6a737d;opacity:.62"></i><i style="left:8.0px;top:17.8px;width:3.4px;height:2px;background:#6a737d;opacity:.62"></i><i style="left:14.0px;top:17.8px;width:65.4px;height:2px;background:#6a737d;opacity:.62"></i><i style="left:8.0px;top:21.8px;width:5.4px;height:2px;background:#6a737d;opacity:.62"></i><i style="left:16.0px;top:21.8px;width:3.4px;height:2px;background:#6a737d;opacity:.62"></i><i style="left:22.0px;top:21.8px;width:159.4px;height:2px;background:#6a737d;opacity:.62"></i><i style="left:8.0px;top:25.8px;width:5.4px;height:2px;background:#6a737d;opacity:.62"></i><i style="left:16.0px;top:25.8px;width:109.4px;height:2px;background:#6a737d;opacity:.62"></i><i style="left:8.0px;top:33.8px;width:1.4px;height:2px;background:#6a737d;opacity:.62"></i><i style="left:12.0px;top:33.8px;width:5.4px;height:2px;background:#6a737d;opacity:.62"></i><i style="left:20.0px;top:33.8px;width:15.4px;height:2px;background:#6a737d;opacity:.62"></i><i style="left:38.0px;top:33.8px;width:3.4px;height:2px;background:#6a737d;opacity:.62"></i><i style="left:8.0px;top:37.8px;width:1.4px;height:2px;background:#e36209;opacity:.62"></i><i style="left:12.0px;top:37.8px;width:1.4px;height:2px;background:#d73a49;opacity:.62"></i><i style="left:16.0px;top:37.8px;width:3.4px;height:2px;background:#d73a49;opacity:.62"></i><i style="left:22.0px;top:37.8px;width:13.4px;height:2px;background:#005cc5;opacity:.62"></i><i style="left:38.0px;top:37.8px;width:7.4px;height:2px;background:#032f62;opacity:.62"></i><i style="left:48.0px;top:37.8px;width:1.4px;height:2px;background:#e36209;opacity:.62"></i><i style="left:52.0px;top:37.8px;width:3.4px;height:2px;background:#24292e;opacity:.62"></i><i style="left:58.0px;top:37.8px;width:7.4px;height:2px;background:#6f42c1;opacity:.62"></i><i style="left:68.0px;top:37.8px;width:13.4px;height:2px;background:#032f62;opacity:.62"></i><i style="left:84.0px;top:37.8px;width:5.4px;height:2px;background:#032f62;opacity:.62"></i><i style="left:8.0px;top:41.8px;width:1.4px;height:2px;background:#e36209;opacity:.62"></i><i style="left:12.0px;top:41.8px;width:1.4px;height:2px;background:#d73a49;opacity:.62"></i><i style="left:16.0px;top:41.8px;width:3.4px;height:2px;background:#d73a49;opacity:.62"></i><i style="left:22.0px;top:41.8px;width:13.4px;height:2px;background:#005cc5;opacity:.62"></i><i style="left:38.0px;top:41.8px;width:5.4px;height:2px;background:#032f62;opacity:.62"></i><i style="left:46.0px;top:41.8px;width:1.4px;height:2px;background:#e36209;opacity:.62"></i><i style="left:50.0px;top:41.8px;width:3.4px;height:2px;background:#24292e;opacity:.62"></i><i style="left:56.0px;top:41.8px;width:7.4px;height:2px;background:#6f42c1;opacity:.62"></i><i style="left:66.0px;top:41.8px;width:13.4px;height:2px;background:#032f62;opacity:.62"></i><i style="left:82.0px;top:41.8px;width:9.4px;height:2px;background:#032f62;opacity:.62"></i><i style="left:8.0px;top:45.8px;width:1.4px;height:2px;background:#e36209;opacity:.62"></i><i style="left:12.0px;top:45.8px;width:1.4px;height:2px;background:#d73a49;opacity:.62"></i><i style="left:16.0px;top:45.8px;width:3.4px;height:2px;background:#d73a49;opacity:.62"></i><i style="left:22.0px;top:45.8px;width:13.4px;height:2px;background:#005cc5;opacity:.62"></i><i style="left:38.0px;top:45.8px;width:17.4px;height:2px;background:#032f62;opacity:.62"></i><i style="left:58.0px;top:45.8px;width:1.4px;height:2px;background:#e36209;opacity:.62"></i><i style="left:62.0px;top:45.8px;width:3.4px;height:2px;background:#24292e;opacity:.62"></i><i style="left:68.0px;top:45.8px;width:7.4px;height:2px;background:#6f42c1;opacity:.62"></i><i style="left:78.0px;top:45.8px;width:13.4px;height:2px;background:#032f62;opacity:.62"></i><i style="left:94.0px;top:45.8px;width:15.4px;height:2px;background:#032f62;opacity:.62"></i><i style="left:8.0px;top:53.8px;width:1.4px;height:2px;background:#6a737d;opacity:.62"></i><i style="left:12.0px;top:53.8px;width:35.4px;height:2px;background:#6a737d;opacity:.62"></i><i style="left:8.0px;top:57.8px;width:3.4px;height:2px;background:#d73a49;opacity:.62"></i><i style="left:14.0px;top:57.8px;width:1.4px;height:2px;background:#e36209;opacity:.62"></i><i style="left:18.0px;top:57.8px;width:1.4px;height:2px;background:#d73a49;opacity:.62"></i><i style="left:22.0px;top:57.8px;width:3.4px;height:2px;background:#d73a49;opacity:.62"></i><i style="left:28.0px;top:57.8px;width:51.4px;height:2px;background:#032f62;opacity:.62"></i><i style="left:82.0px;top:57.8px;width:3.4px;height:2px;background:#e36209;opacity:.62"></i><i style="left:88.0px;top:57.8px;width:7.4px;height:2px;background:#d73a49;opacity:.62"></i><i style="left:16.0px;top:61.8px;width:7.4px;height:2px;background:#005cc5;opacity:.62"></i><i style="left:26.0px;top:61.8px;width:3.4px;height:2px;background:#005cc5;opacity:.62"></i><i style="left:32.0px;top:61.8px;width:51.4px;height:2px;background:#032f62;opacity:.62"></i><i style="left:86.0px;top:61.8px;width:155.4px;height:2px;background:#032f62;opacity:.62"></i><i style="left:8.0px;top:65.8px;width:3.4px;height:2px;background:#d73a49;opacity:.62"></i><i style="left:8.0px;top:73.8px;width:1.4px;height:2px;background:#6a737d;opacity:.62"></i><i style="left:12.0px;top:73.8px;width:47.4px;height:2px;background:#6a737d;opacity:.62"></i><i style="left:8.0px;top:77.8px;width:1.4px;height:2px;background:#6a737d;opacity:.62"></i><i style="left:12.0px;top:77.8px;width:27.4px;height:2px;background:#6a737d;opacity:.62"></i><i style="left:42.0px;top:77.8px;width:3.4px;height:2px;background:#6a737d;opacity:.62"></i><i style="left:48.0px;top:77.8px;width:51.4px;height:2px;background:#6a737d;opacity:.62"></i><i style="left:102.0px;top:77.8px;width:25.4px;height:2px;background:#6a737d;opacity:.62"></i><i style="left:130.0px;top:77.8px;width:11.4px;height:2px;background:#6a737d;opacity:.62"></i><i style="left:8.0px;top:81.8px;width:15.4px;height:2px;background:#24292e;opacity:.62"></i><i style="left:24.0px;top:81.8px;width:1.4px;height:2px;background:#d73a49;opacity:.62"></i><i style="left:26.0px;top:81.8px;width:9.4px;height:2px;background:#005cc5;opacity:.62"></i><i style="left:8.0px;top:85.8px;width:19.4px;height:2px;background:#24292e;opacity:.62"></i><i style="left:28.0px;top:85.8px;width:1.4px;height:2px;background:#d73a49;opacity:.62"></i><i style="left:30.0px;top:85.8px;width:83.4px;height:2px;background:#032f62;opacity:.62"></i><i style="left:8.0px;top:89.8px;width:1.4px;height:2px;background:#6a737d;opacity:.62"></i><i style="left:12.0px;top:89.8px;width:35.4px;height:2px;background:#6a737d;opacity:.62"></i><i style="left:8px;top:92.5px;width:232px;height:4px;background:#e4e5e7"></i><i style="left:50.0px;top:92.5px;width:30px;height:4px;background:#c8cacd"></i><i style="left:8.0px;top:93.8px;width:15.4px;height:2px;background:#6f42c1;opacity:.62"></i><i style="left:26.0px;top:93.8px;width:21.4px;height:2px;background:#24292e;opacity:.62"></i><i style="left:8.0px;top:101.8px;width:1.4px;height:2px;background:#6a737d;opacity:.62"></i><i style="left:12.0px;top:101.8px;width:115.4px;height:2px;background:#6a737d;opacity:.62"></i><i style="left:8.0px;top:105.8px;width:7.4px;height:2px;background:#005cc5;opacity:.62"></i><i style="left:18.0px;top:105.8px;width:3.4px;height:2px;background:#005cc5;opacity:.62"></i><i style="left:24.0px;top:105.8px;width:7.4px;height:2px;background:#032f62;opacity:.62"></i><i style="left:8.0px;top:109.8px;width:7.4px;height:2px;background:#005cc5;opacity:.62"></i><i style="left:18.0px;top:109.8px;width:3.4px;height:2px;background:#005cc5;opacity:.62"></i><i style="left:24.0px;top:109.8px;width:49.4px;height:2px;background:#032f62;opacity:.62"></i><i style="left:76.0px;top:109.8px;width:27.4px;height:2px;background:#032f62;opacity:.62"></i><i style="left:8.0px;top:117.8px;width:1.4px;height:2px;background:#6a737d;opacity:.62"></i><i style="left:12.0px;top:117.8px;width:73.4px;height:2px;background:#6a737d;opacity:.62"></i><i style="left:8.0px;top:121.8px;width:39.4px;height:2px;background:#24292e;opacity:.62"></i><i style="left:48.0px;top:121.8px;width:1.4px;height:2px;background:#d73a49;opacity:.62"></i><i style="left:50.0px;top:121.8px;width:1.4px;height:2px;background:#005cc5;opacity:.62"></i><i style="left:8.0px;top:129.8px;width:33.4px;height:2px;background:#6f42c1;opacity:.62"></i><i style="left:42.0px;top:129.8px;width:3.4px;height:2px;background:#005cc5;opacity:.62"></i><i style="left:48.0px;top:129.8px;width:1.4px;height:2px;background:#005cc5;opacity:.62"></i><i style="left:16.0px;top:133.8px;width:1.4px;height:2px;background:#6a737d;opacity:.62"></i><i style="left:20.0px;top:133.8px;width:51.4px;height:2px;background:#6a737d;opacity:.62"></i><i style="left:16.0px;top:137.8px;width:9.4px;height:2px;background:#d73a49;opacity:.62"></i><i style="left:28.0px;top:137.8px;width:7.4px;height:2px;background:#005cc5;opacity:.62"></i><i style="left:38.0px;top:137.8px;width:15.4px;height:2px;background:#032f62;opacity:.62"></i><i style="left:54.0px;top:137.8px;width:1.4px;height:2px;background:#24292e;opacity:.62"></i><i style="left:58.0px;top:137.8px;width:3.4px;height:2px;background:#d73a49;opacity:.62"></i><i style="left:24.0px;top:141.8px;width:1.4px;height:2px;background:#6a737d;opacity:.62"></i><i style="left:28.0px;top:141.8px;width:55.4px;height:2px;background:#6a737d;opacity:.62"></i><i style="left:8px;top:144.5px;width:232px;height:4px;background:#e4e5e7"></i><i style="left:116.0px;top:144.5px;width:30px;height:4px;background:#c8cacd"></i><i style="left:24.0px;top:145.8px;width:9.4px;height:2px;background:#6f42c1;opacity:.62"></i><i style="left:36.0px;top:145.8px;width:1.4px;height:2px;background:#032f62;opacity:.62"></i><i style="left:40.0px;top:145.8px;width:3.4px;height:2px;background:#005cc5;opacity:.62"></i><i style="left:44.0px;top:145.8px;width:17.4px;height:2px;background:#24292e;opacity:.62"></i><i style="left:64.0px;top:145.8px;width:33.4px;height:2px;background:#032f62;opacity:.62"></i><i style="left:24.0px;top:153.8px;width:1.4px;height:2px;background:#6a737d;opacity:.62"></i><i style="left:32.0px;top:153.8px;width:39.4px;height:2px;background:#6a737d;opacity:.62"></i><i style="left:24.0px;top:157.8px;width:3.4px;height:2px;background:#d73a49;opacity:.62"></i><i style="left:30.0px;top:157.8px;width:1.4px;height:2px;background:#e36209;opacity:.62"></i><i style="left:34.0px;top:157.8px;width:3.4px;height:2px;background:#005cc5;opacity:.62"></i><i style="left:40.0px;top:157.8px;width:5.4px;height:2px;background:#d73a49;opacity:.62"></i><i style="left:48.0px;top:157.8px;width:1.4px;height:2px;background:#005cc5;opacity:.62"></i><i style="left:52.0px;top:157.8px;width:3.4px;height:2px;background:#e36209;opacity:.62"></i><i style="left:58.0px;top:157.8px;width:7.4px;height:2px;background:#d73a49;opacity:.62"></i><i style="left:32.0px;top:161.8px;width:1.4px;height:2px;background:#6a737d;opacity:.62"></i><i style="left:36.0px;top:161.8px;width:103.4px;height:2px;background:#6a737d;opacity:.62"></i><i style="left:32.0px;top:165.8px;width:7.4px;height:2px;background:#005cc5;opacity:.62"></i><i style="left:42.0px;top:165.8px;width:3.4px;height:2px;background:#005cc5;opacity:.62"></i><i style="left:48.0px;top:165.8px;width:19.4px;height:2px;background:#032f62;opacity:.62"></i><i style="left:70.0px;top:165.8px;width:17.4px;height:2px;background:#24292e;opacity:.62"></i><i style="left:90.0px;top:165.8px;width:5.4px;height:2px;background:#032f62;opacity:.62"></i><i style="left:32.0px;top:169.8px;width:1.4px;height:2px;background:#6a737d;opacity:.62"></i><i style="left:36.0px;top:169.8px;width:7.4px;height:2px;background:#6a737d;opacity:.62"></i><i style="left:32.0px;top:173.8px;width:39.4px;height:2px;background:#24292e;opacity:.62"></i><i style="left:72.0px;top:173.8px;width:1.4px;height:2px;background:#d73a49;opacity:.62"></i><i style="left:74.0px;top:173.8px;width:1.4px;height:2px;background:#005cc5;opacity:.62"></i><i style="left:32.0px;top:177.8px;width:9.4px;height:2px;background:#d73a49;opacity:.62"></i><i style="left:24.0px;top:181.8px;width:3.4px;height:2px;background:#d73a49;opacity:.62"></i><i style="left:16.0px;top:185.8px;width:7.4px;height:2px;background:#d73a49;opacity:.62"></i><i style="left:26.0px;top:185.8px;width:1.4px;height:2px;background:#d73a49;opacity:.62"></i><i style="left:28.0px;top:185.8px;width:25.4px;height:2px;background:#24292e;opacity:.62"></i></div></div><div class="edsh"></div></div><div class="sbar"><svg style="position:absolute;left:24px;top:8px" width="22" height="24" viewBox="0 0 22 24"><path d="M1.500 8.500L8.500 15.500L1.500 22.500M19.500 1.500L12.500 8.500L19.500 15.500" fill="none" stroke="#586069" stroke-width="2"/></svg><svg style="position:absolute;left:86px;top:9px" width="24" height="24" viewBox="0 0 24 24"><circle cx="12" cy="12" r="10.500" fill="none" stroke="#586069" stroke-width="1.800"/><path d="M7.500 7.500L16.500 16.500M16.500 7.500L7.500 16.500" stroke="#586069" stroke-width="1.800"/></svg><span class="st" style="left:118px">0</span><svg style="position:absolute;left:142px;top:8px" width="26" height="24" viewBox="0 0 26 24"><path d="M13 2L24.500 22.500H1.500Z" fill="none" stroke="#586069" stroke-width="1.800" stroke-linejoin="round"/><path d="M13 9V16M13 18V20.200" stroke="#586069" stroke-width="1.900"/></svg><span class="st" style="left:175px">0</span></div></div>
<div id="term"><div class="tt"><span class="tl" style="left:16px;background:#fe5f57;box-shadow:inset 0 0 0 1px #e2463f"></span><span class="tl" style="left:56px;background:#febc2e;box-shadow:inset 0 0 0 1px #dfa023"></span><span class="tl" style="left:96px;background:#28c840;box-shadow:inset 0 0 0 1px #1dad2c"></span><svg style="position:absolute;left:699px;top:12px" width="30" height="30" viewBox="0 0 30 30"><path d="M1 5.500 a3 3 0 0 1 3-3 h7 l3 3 h12 a3 3 0 0 1 3 3 V9H1z" fill="#2f93ea"/><rect x="1" y="7" width="28" height="21" rx="3" fill="#6cc4f7"/><rect x="1" y="7" width="28" height="2" fill="#8dd4fb"/><path d="M15 12.500l-5.500 5h1.800v4h2.600v-2.600h2.200v2.600h2.600v-4h1.800z" fill="#3b9be8"/></svg><span class="ttl">chanlonhoo — -zsh — 100×27</span></div><div class="tb"><div class="l" style="top:42px">chanlonhoo@chanlondeMacBook-Air ~ % bash ~/Desktop/1.sh</div><i class="br" style="left:4px;top:48px;border-left:2px solid #5c5c5c;border-top:2px solid #5c5c5c;border-bottom:2px solid #5c5c5c"></i><i class="br" style="left:1810px;top:48px;border-right:2px solid #5c5c5c;border-top:2px solid #5c5c5c;border-bottom:2px solid #5c5c5c"></i><div class="l" style="top:162px"><b>将</b><b>压</b><b>缩</b><b>包</b><b>文</b><b>件</b><b>拖</b><b>入</b><b>到</b><b>终</b><b>端</b>: /Users/chanlonhoo/Desktop/HohenzollernBurg.rar</div><div class="l" style="top:242px"><b>没</b><b>找</b><b>到</b><b>正</b><b>确</b><b>的</b><b>密</b><b>码</b><b>。</b></div><div class="l" style="top:322px">chanlonhoo@chanlondeMacBook-Air ~ % /Users/chanlonhoo/Desktop/BisonWindCave.rar &gt;/dev/null 2&gt;&amp;1</div><i class="br" style="left:4px;top:328px;border-left:2px solid #5c5c5c;border-top:2px solid #5c5c5c;border-bottom:2px solid #5c5c5c"></i><i class="br" style="left:1810px;top:328px;border-right:2px solid #5c5c5c;border-top:2px solid #5c5c5c;border-bottom:2px solid #5c5c5c"></i><div class="l" style="top:362px">chanlonhoo@chanlondeMacBook-Air ~ % bash ~/Desktop/1.sh</div><div class="l" style="top:402px"></div><i class="br" style="left:4px;top:408px;border-left:2px solid #5c5c5c;border-top:2px solid #5c5c5c;border-bottom:2px solid #5c5c5c"></i><i class="br" style="left:1810px;top:408px;border-right:2px solid #5c5c5c;border-top:2px solid #5c5c5c;border-bottom:2px solid #5c5c5c"></i><div class="l" style="top:482px"><b>将</b><b>压</b><b>缩</b><b>包</b><b>文</b><b>件</b><b>拖</b><b>入</b><b>到</b><b>终</b><b>端</b>: /Users/chanlonhoo/Desktop/BisonWindCave.rar</div><div class="l" style="top:562px"><b>密</b><b>码</b><b>是</b>: asd</div><div class="l" style="top:642px">chanlonhoo@chanlondeMacBook-Air ~ % </div><i class="cur" style="left:658px;top:642px"></i></div></div>
<div id="dock"><div class="dslot" style="left:14.7px"><div class="di" style="background:linear-gradient(#21b4f8,#1a70e2);"><svg width="60" height="60" viewBox="0 0 60 60"><path d="M31 0 C26 12 24 24 24 34 H32 C32 44 33 52 35 60 H60 V0Z" fill="#e9eef5"/><path d="M31 0 C26 12 24 24 24 34 H32 C32 44 33 52 35 60" fill="none" stroke="#1b3c6b" stroke-width="1.500"/><path d="M13 42 C22 51 38 51 48 42" fill="none" stroke="#1b2d4a" stroke-width="2.400" stroke-linecap="round"/><path d="M17 17V24M44 17V24" stroke="#1b2d4a" stroke-width="2.800" stroke-linecap="round"/></svg></div></div><i class="dot" style="left:41.2px"></i><div class="dslot" style="left:92.2px"><div class="di" style="background:linear-gradient(#e4dcf6,#cfc6ee);"><svg width="60" height="60"><rect x="10.0" y="11.0" width="11" height="11" rx="2.500" fill="#5ac24a"/><rect x="24.5" y="11.0" width="11" height="11" rx="2.500" fill="#f5a623"/><rect x="39.0" y="11.0" width="11" height="11" rx="2.500" fill="#f08a24"/><rect x="10.0" y="25.5" width="11" height="11" rx="2.500" fill="#e8382d"/><rect x="24.5" y="25.5" width="11" height="11" rx="2.500" fill="#a9adb5"/><rect x="39.0" y="25.5" width="11" height="11" rx="2.500" fill="#f0435a"/><rect x="10.0" y="40.0" width="11" height="11" rx="2.500" fill="#a14fd8"/><rect x="24.5" y="40.0" width="11" height="11" rx="2.500" fill="#2a8df2"/><rect x="39.0" y="40.0" width="11" height="11" rx="2.500" fill="#33c7b0"/></svg></div></div><div class="dslot" style="left:169.8px"><div class="di" style="background:#f4f4f6;"><svg width="60" height="60" viewBox="0 0 60 60"><circle cx="30" cy="30" r="25" fill="#1e8ff0"/><circle cx="30" cy="30" r="25" fill="none" stroke="#dfe5ee" stroke-width="2"/><path d="M46 14L33 33L27 27Z" fill="#ff3b30"/><path d="M14 46L27 27L33 33Z" fill="#fff"/></svg></div></div><i class="dot" style="left:196.3px"></i><div class="dslot" style="left:247.3px"><div class="di" style="background:linear-gradient(#5ff777,#0cbd2a);"><svg width="60" height="60" viewBox="0 0 60 60"><ellipse cx="30" cy="28" rx="21" ry="17" fill="#fff"/><path d="M16 38 C16 44 13 47 10 49 C17 49 22 46 25 43Z" fill="#fff"/></svg></div></div><i class="dot" style="left:273.8px"></i><div class="dslot" style="left:324.9px"><div class="di" style="background:linear-gradient(#b98d4e,#a87b3c);"><svg width="60" height="60" viewBox="0 0 60 60"><circle cx="29" cy="30" r="17" fill="none" stroke="#8f6a34" stroke-width="2"/><circle cx="29" cy="25" r="6" fill="#9a7238"/><path d="M17 42 C19 34 39 34 41 42Z" fill="#9a7238"/><rect x="55" y="10" width="5" height="10" fill="#bdbdbd"/><rect x="55" y="22" width="5" height="10" fill="#f2a33a"/><rect x="55" y="34" width="5" height="10" fill="#49a8f0"/></svg></div></div><div class="dslot" style="left:402.4px"><div class="di" style="background:linear-gradient(#1f8cf6,#36c6fa);"><svg width="60" height="60" viewBox="0 0 60 60"><rect x="9" y="16" width="42" height="28" rx="3" fill="#fff"/><path d="M10 18L30 34L50 18" fill="none" stroke="#c9ccd2" stroke-width="2"/><path d="M10 43L24 30M50 43L36 30" stroke="#d5d8dd" stroke-width="1.500"/></svg></div><span class="bdg" style="left:40px;width:30px;font-size:14.500px">141</span></div><i class="dot" style="left:428.9px"></i><div class="dslot" style="left:480.0px"><div class="di" style="background:#e9efe4;"><svg width="60" height="60" viewBox="0 0 60 60"><rect width="60" height="60" fill="#eef1ea"/><path d="M0 0H22L14 60H0Z" fill="#6fd36c"/><path d="M40 0H60V22C50 22 42 14 40 0Z" fill="#62c462"/><path d="M40 0H60V16C52 16 44 10 42 0Z" fill="#cfd5d8"/><path d="M0 38L20 60H0Z" fill="#f7a3c0"/><path d="M36 60L60 40V60Z" fill="#f9d54a"/><rect x="24" y="0" width="10" height="60" fill="#2f86ec"/><circle cx="23" cy="38" r="12" fill="#2f86ec" stroke="#fff" stroke-width="2.500"/><path d="M23 29L29 44L23 40L17 44Z" fill="#fff"/></svg></div></div><div class="dslot" style="left:557.6px"><div class="di" style="background:#fbfbfb;"><svg width="60" height="60" viewBox="0 0 60 60"><ellipse cx="30" cy="17.500" rx="7" ry="11.500" fill="#f7a52b" fill-opacity=".82" transform="rotate(0 30 30)"/><ellipse cx="30" cy="17.500" rx="7" ry="11.500" fill="#e3cf3a" fill-opacity=".82" transform="rotate(45 30 30)"/><ellipse cx="30" cy="17.500" rx="7" ry="11.500" fill="#6fc04a" fill-opacity=".82" transform="rotate(90 30 30)"/><ellipse cx="30" cy="17.500" rx="7" ry="11.500" fill="#3fbfa0" fill-opacity=".82" transform="rotate(135 30 30)"/><ellipse cx="30" cy="17.500" rx="7" ry="11.500" fill="#4a8fe8" fill-opacity=".82" transform="rotate(180 30 30)"/><ellipse cx="30" cy="17.500" rx="7" ry="11.500" fill="#8a6bd0" fill-opacity=".82" transform="rotate(225 30 30)"/><ellipse cx="30" cy="17.500" rx="7" ry="11.500" fill="#d7589f" fill-opacity=".82" transform="rotate(270 30 30)"/><ellipse cx="30" cy="17.500" rx="7" ry="11.500" fill="#ea4b3c" fill-opacity=".82" transform="rotate(315 30 30)"/></svg></div></div><div class="dslot" style="left:635.1px"><div class="di" style="background:linear-gradient(#2a9df7,#0b78ee);"><svg width="60" height="60" viewBox="0 0 60 60"><path d="M16 12 C26 16 38 20 44 26 C42 30 39 33 36 35 L41 36 L28 52 L31 41 L26 40 C27 38 28 36 29 34 C24 33 21 30 20 27 C23 28 26 28 28 28 C22 25 18 19 16 12Z" fill="#fff" transform="translate(30 30) scale(1.180) translate(-30 -31)"/></svg></div></div><i class="dot" style="left:661.6px"></i><div class="dslot" style="left:712.6px"><div class="di" style="background:linear-gradient(#1fdc67,#07c055);"><svg width="60" height="60" viewBox="0 0 60 60"><ellipse cx="24" cy="25" rx="15" ry="12.500" fill="#fff"/><path d="M14 34L12 41L20 37Z" fill="#fff"/><ellipse cx="38" cy="37" rx="13" ry="10.500" fill="#fff" stroke="#12c95e" stroke-width="1.500"/><path d="M45 45L47 50L40 47Z" fill="#fff"/><circle cx="19" cy="22" r="2" fill="#12c95e"/><circle cx="29" cy="22" r="2" fill="#12c95e"/><circle cx="34" cy="35" r="1.700" fill="#12c95e"/><circle cx="42" cy="35" r="1.700" fill="#12c95e"/></svg></div></div><i class="dot" style="left:739.1px"></i><div class="dslot" style="left:790.2px"><div class="di" style="background:linear-gradient(#f7254f,#e0143f);"><svg width="60" height="60" viewBox="0 0 60 60"><path d="M12.500 8.500H47.500V50L30 40L12.500 50Z" fill="#fff"/><path d="M12.500 37L30 28L47.500 37V50L30 40L12.500 50Z" fill="#f9c3cf"/><path d="M30 15L33.200 22.200L41 23L35.200 28.200L36.800 36L30 32L23.200 36L24.800 28.200L19 23L26.800 22.200Z" fill="#ee1c47"/></svg></div></div><i class="dot" style="left:816.7px"></i><div class="dslot" style="left:867.8px"><div class="di" style="background:linear-gradient(#fb5c74,#f9233b);"><svg width="60" height="60" viewBox="0 0 60 60"><path d="M25 16L44 12V38A6 5 0 1 1 40 33.500V20L29 22.500V42A6 5 0 1 1 25 37.500Z" fill="#fff" transform="translate(30 30) scale(1.220) translate(-31.500 -29.500)"/></svg></div></div><div class="dslot" style="left:945.3px"><div class="di" style="background:linear-gradient(#7434a6,#662c96);"><svg width="60" height="60" viewBox="0 0 60 60"><circle cx="30" cy="30" r="25" fill="#ede6f7"/><path d="M30 15 C22 15 17 20 17 27 C17 33 20 37 25 38.500 C24 40 24 42 24 44 V55 H36 V44 C36 42 36 40 35 38.500 C40 37 43 33 43 27 C43 20 38 15 30 15Z" fill="#6a35ad"/><path d="M18 12L25 18H18.500ZM42 12L35 18H41.500Z" fill="#6a35ad"/><path d="M24 46 C20 47 18 44 16 42" stroke="#6a35ad" stroke-width="2.500" fill="none"/></svg></div></div><i class="dot" style="left:971.8px"></i><div class="dslot" style="left:1022.8px"><div class="di" style="background:#fdfdfd;box-shadow:-4px 5px 0 -1px #e6e6e6"><svg width="60" height="60"><path d="M10 22H50M10 29H50M10 36H50M10 43H50" stroke="#e6e6e8" stroke-width="2.200"/></svg><span style="position:absolute;left:0;top:0;width:60px;line-height:60px;text-align:center;font-family:'Liberation Serif',serif;font-size:48px;font-weight:bold;color:#1a1a1a;transform:scaleX(.92)">T</span></div></div><i class="dot" style="left:1049.3px"></i><div class="dslot" style="left:1100.4px"><div class="di" style="background:linear-gradient(#f9d643 0,#f7c90f 22%,#fdfdfd 22%,#fdfdfd 100%);"><svg width="60" height="60"><path d="M4 24H56M4 34H56M4 44H56" stroke="#e4e0d8" stroke-width="1.200" stroke-dasharray="2 1.500"/></svg></div></div><div class="dslot" style="left:1178.0px"><div class="di" style="background:#fdfdfd;"><svg width="60" height="60" viewBox="0 0 60 60"><circle cx="13" cy="16" r="4.200" fill="#2a84f5"/><circle cx="13" cy="30" r="4.200" fill="#f2433a"/><circle cx="13" cy="44" r="4.200" fill="#f59a23"/><circle cx="13" cy="16" r="5.500" fill="none" stroke="#cfe0fb" stroke-width="1"/><path d="M23 16H53M23 30H53M23 44H53" stroke="#d0d0d4" stroke-width="1.600"/></svg></div></div><div class="dslot" style="left:1255.5px"><div class="di" style="background:linear-gradient(#9a9ca1,#6e7075);"><svg width="60" height="60" viewBox="0 0 60 60"><circle cx="30" cy="30" r="24" fill="#55575b" stroke="#c9cbd0" stroke-width="2"/><circle cx="30" cy="30" r="17" fill="#8b8d92" stroke="#3b3c40" stroke-width="4" stroke-dasharray="3 2.200"/><circle cx="30" cy="30" r="5" fill="#3b3c40"/><path d="M30 30L30 14M30 30L44 38M30 30L16 38" stroke="#3b3c40" stroke-width="3"/></svg></div><span class="bdg" style="left:42px;width:26px">1</span></div><div class="dslot" style="left:1333.0px"><div class="di" style="background:#d5344a;"><svg width="60" height="60" viewBox="0 0 60 60"><rect x="2" y="2" width="56" height="56" rx="12" fill="none" stroke="#fff" stroke-width="2.500"/><path d="M12 30 C22 30 22 18 30 16 M12 30 C22 30 24 44 30 46 M36 40L44 31" stroke="#fff" stroke-width="3.200" fill="none"/><circle cx="11" cy="30" r="3.500" fill="#d5344a" stroke="#fff" stroke-width="2.800"/><circle cx="31" cy="14" r="3.500" fill="#d5344a" stroke="#fff" stroke-width="2.800"/><circle cx="31" cy="46" r="3.500" fill="#d5344a" stroke="#fff" stroke-width="2.800"/><circle cx="46" cy="29" r="3.500" fill="#d5344a" stroke="#fff" stroke-width="2.800"/></svg></div></div><div class="dslot" style="left:1410.6px"><div class="di" style="background:none;overflow:visible;box-shadow:none;border-radius:0"><svg width="68" height="68" viewBox="0 0 68 68" style="position:absolute;left:-2px;top:-4px"><rect x="1" y="3" width="62" height="44" rx="2" fill="#1f5fbf" stroke="#6b7178" stroke-width="2"/><rect x="3" y="5" width="58" height="40" fill="#1a86e8"/><path d="M22 14H31V23H22ZM33 14H42V23H33ZM22 25H31V34H22ZM33 25H42V34H33Z" fill="#7cc4f7"/><rect x="1" y="47" width="62" height="9" fill="#d4d7db"/><path d="M26 56H40L42 64H24Z" fill="#b9bcc1"/><rect x="39" y="0" width="8" height="68" rx="3" fill="#e0121e"/><rect x="53" y="0" width="8" height="68" rx="3" fill="#e0121e"/></svg></div></div><i class="dot" style="left:1437.1px"></i><div class="dslot" style="left:1488.2px"><div class="di" style="background:#fdfdfd;"><svg width="60" height="60" viewBox="0 0 60 60"><circle cx="20" cy="36" r="9" fill="none" stroke="#2a9df4" stroke-width="6"/><circle cx="40" cy="36" r="9" fill="none" stroke="#2a9df4" stroke-width="6"/><circle cx="30" cy="22" r="9" fill="none" stroke="#2a9df4" stroke-width="6"/><path d="M22 17A9 9 0 0 1 38 17" fill="none" stroke="#ea3b47" stroke-width="6"/><rect x="20" y="55" width="20" height="3" rx="1.500" fill="#ea3b47"/><rect x="30" y="55" width="10" height="3" rx="1.500" fill="#2a9df4"/></svg></div></div><i class="dot" style="left:1514.7px"></i><div class="dslot" style="left:1565.7px"><div class="di" style="background:linear-gradient(#f43a3a,#e0201f);"><svg width="60" height="60" viewBox="0 0 60 60"><path d="M0 12 C20 8 44 16 58 34 C48 40 30 44 10 40Z" fill="#f76b6b" opacity=".55"/><circle cx="8" cy="27" r="9" fill="none" stroke="#fff" stroke-width="5"/><path d="M0 10 C24 6 46 16 58 32" fill="none" stroke="#fff" stroke-width="0"/></svg><span style="position:absolute;left:35px;top:38px;font-size:13px;font-weight:bold;color:#fff;font-family:'Liberation Sans',sans-serif;transform:scaleX(.8);transform-origin:left">PDF</span></div></div><i class="dot" style="left:1592.2px"></i><div class="dslot" style="left:1643.2px"><div class="di" style="background:linear-gradient(#f4473c 0,#f4473c 28%,#fdfdfd 28%,#fdfdfd 100%);"><span style="position:absolute;left:0;top:1px;width:60px;text-align:center;font-size:13px;line-height:16px;color:#fff;font-family:'Liberation Sans','Noto Sans CJK SC',sans-serif">4月</span><span style="position:absolute;left:0;top:17px;width:60px;text-align:center;font-size:37px;line-height:44px;color:#2b2b2d;font-family:'DejaVu Sans','Liberation Sans',sans-serif;font-weight:200;letter-spacing:-2.500px;transform:scaleX(.9)">19</span></div></div><i class="dot" style="left:1669.8px"></i><div class="dslot" style="left:1720.8px"><div class="di" style="background:#1c1c1e;box-shadow:inset 0 0 0 2.500px #9fa2a8;"><span style="position:absolute;left:9px;top:8px;font-size:15px;font-weight:bold;line-height:16px;color:#fff;font-family:'DejaVu Sans Mono',monospace">&gt;_</span></div></div><i class="dot" style="left:1747.3px"></i><div class="dslot" style="left:1798.3px"><div class="di" style="background:#fdfdfd;"><svg width="60" height="60" viewBox="0 0 60 60"><circle cx="34" cy="30" r="19" fill="#ed6c47"/><path d="M34 11A19 19 0 0 1 53 30H34Z" fill="#ff8f6b"/><path d="M34 49A19 19 0 0 0 53 30H34Z" fill="#d35230"/><rect x="8" y="19" width="22" height="22" rx="2.500" fill="#c43e1c"/><text x="19" y="36.500" font-size="17" font-weight="bold" fill="#fff" text-anchor="middle" font-family="Liberation Sans,sans-serif">P</text></svg></div></div><i class="dot" style="left:1824.8px"></i><div class="dslot" style="left:1875.9px"><div class="di" style="background:#fdfdfd;"><svg width="60" height="60" viewBox="0 0 60 60"><rect x="18" y="9" width="32" height="42" rx="3" fill="#41a5ee"/><rect x="18" y="19.500" width="32" height="10.500" fill="#2b7cd3"/><rect x="18" y="30" width="32" height="10.500" fill="#185abd"/><path d="M18 40.500H50V48A3 3 0 0 1 47 51H21A3 3 0 0 1 18 48Z" fill="#103f91"/><rect x="7" y="19" width="22" height="22" rx="2.500" fill="#185abd"/><text x="18" y="36" font-size="16" font-weight="bold" fill="#fff" text-anchor="middle" font-family="Liberation Sans,sans-serif">W</text></svg></div></div><i class="dot" style="left:1902.4px"></i><div class="dslot" style="left:1953.5px"><div class="di" style="background:none;overflow:visible;box-shadow:none;border-radius:0"><svg width="72" height="74" viewBox="0 0 72 74" style="position:absolute;left:-8px;top:-8px"><path d="M2 0H40L56 14V30H8V50Z" fill="#0e3a6e"/><path d="M8 18H48L66 34V72H30L8 50Z" fill="#fdfdfd"/><path d="M20 26H50L68 42V72H30L20 62Z" fill="#17c1ea"/><path d="M24 42H42V32L62 48L42 64V54H24Z" fill="#fff"/></svg></div></div><i class="dot" style="left:1980.0px"></i><div class="dslot" style="left:2031.0px"><div class="di" style="background:none;overflow:visible;box-shadow:none;border-radius:0"><svg width="62" height="62" viewBox="0 0 62 62" style="position:absolute;left:-1px;top:-1px"><rect x="0" y="0" width="29.500" height="29.500" fill="#1182ec"/><rect x="32" y="0" width="30" height="29.500" fill="#1a8df2"/><rect x="0" y="32" width="29.500" height="30" fill="#0d7de8"/><rect x="32" y="32" width="30" height="30" fill="#1384ee"/></svg></div></div><i class="dot" style="left:2057.5px"></i><div class="dslot" style="left:2108.5px"><div class="di" style="background:#fdfdfd;"><svg width="60" height="60" viewBox="0 0 60 60"><path d="M42 10L50 14V46L42 50L20 32L13 38L9 35V25L13 22L20 28Z" fill="#1f7ad4"/><path d="M42 10L50 14V46L42 50Z" fill="#2f9cf0"/><path d="M42 21V39L30 30Z" fill="#fdfdfd"/><path d="M9 25L13 22L42 50L36 50Z" fill="#2489e0" opacity=".0"/></svg></div></div><i class="dot" style="left:2135.0px"></i><div class="dslot" style="left:2186.1px"><div class="di" style="background:#fbfbfb;overflow:visible"><svg width="66" height="72" viewBox="0 0 66 72" style="position:absolute;left:0;top:-8px"><path d="M0 20H60M0 27H60M0 34H60M0 41H60M0 48H60M0 55H60M0 62H60" stroke="#cfd0d4" stroke-width="1.300"/><path d="M10 8V68" stroke="#f3b7b7" stroke-width="1"/><path d="M54 2L58 4L30 62L24 70L25 60Z" fill="#aeb9c6" stroke="#7d8794" stroke-width="1"/><path d="M55 2L57 3L31 58" stroke="#e8eef5" stroke-width="1.500" fill="none"/></svg></div></div><i class="dot" style="left:2212.6px"></i><div class="dslot" style="left:2263.6px"><div class="di" style="background:#15181b;box-shadow:inset 0 0 0 3px #b8bbc0,inset 0 0 0 5px #000;"><span style="position:absolute;left:8px;top:7px;font-size:17px;font-weight:bold;line-height:18px;color:#2bd94a;font-family:'DejaVu Sans Mono',monospace">$</span><span style="position:absolute;left:21px;top:9px;width:7px;height:14px;background:#1f8f37;opacity:.8"></span></div></div><i class="dot" style="left:2290.1px"></i><i class="sep" style="left:2350px"></i><div class="dslot" style="left:2374.7px"><svg width="60" height="70" viewBox="0 0 60 70" style="position:absolute;left:0;top:-8px"><path d="M8 2H36L54 20V68H8Z" fill="#e9e9eb" stroke="#c9c9cc" stroke-width="1"/><path d="M36 2V20H54Z" fill="#f8f8f9" stroke="#c9c9cc" stroke-width="1"/><path d="M12 10H30M12 14H26M12 18H30M12 22H24M12 26H28M12 30H22M12 34H26M12 38H20" stroke="#c4c4c8" stroke-width="1"/><text x="31" y="62" font-size="11" fill="#5f5f63" text-anchor="middle" font-family="Liberation Sans,sans-serif">TXT</text></svg></div><div class="dslot" style="left:2451.0px"><div style="position:absolute;left:-4px;top:10px;width:70px;height:40px;background:#fff"></div><div style="position:absolute;left:42px;top:42px;width:24px;height:24px;border-radius:6px;background:#fafafa;box-shadow:0 1px 2px rgba(0,0,0,.3);font-family:'Liberation Serif',serif;font-size:21px;line-height:24px;text-align:center;color:#111">T</div></div><div class="dslot" style="left:2529.7px"><div style="position:absolute;left:-5px;top:6px;width:70px;height:53px;background:linear-gradient(#b9d8ee,#d8e6f2)"></div><svg width="70" height="70" viewBox="0 0 70 70" style="position:absolute;left:-5px;top:2px"><path d="M20 14 C34 6 52 14 50 28 C60 34 52 50 38 46 C28 54 10 48 14 34 C8 26 12 18 20 14Z" fill="#1557e0"/><path d="M22 20 C32 14 44 18 44 28 C50 34 44 42 36 40 C28 46 18 40 20 32 C16 28 18 22 22 20Z" fill="#2f7bf5"/><rect x="0" y="5" width="4" height="48" fill="#dfe7ee"/><rect x="44" y="40" width="20" height="14" fill="#1a86e8" stroke="#777" stroke-width="1"/><rect x="58" y="36" width="3.500" height="26" fill="#e0121e"/><rect x="64" y="36" width="3.500" height="26" fill="#e0121e"/></svg></div><div class="dslot" style="left:2608.0px"><div style="position:absolute;left:-5px;top:10px;width:70px;height:40px;background:#fbfbfb"></div><svg width="70" height="70" viewBox="0 0 70 70" style="position:absolute;left:-5px;top:2px"><rect x="0" y="8" width="70" height="3" fill="#2fae6a"/><path d="M10 16H50M10 24H44M10 32H52M10 38H30" stroke="#c9ccd0" stroke-width="1.200"/><rect x="54" y="18" width="10" height="3" fill="#5fc86f"/><circle cx="58" cy="50" r="11" fill="#f4f4f6"/><circle cx="58" cy="50" r="8.500" fill="#1e8ff0"/><path d="M63 45L59 51L57 49Z" fill="#ff3b30"/><path d="M53 55L57 49L59 51Z" fill="#fff"/></svg></div><div class="dslot" style="left:2684.6px"><svg width="60" height="72" viewBox="0 0 60 72" style="position:absolute;left:0;top:-9px"><path d="M7 12H53L48 66 C48 69 44 70 30 70 C16 70 12 69 12 66Z" fill="#f1f1f4" fill-opacity=".94" stroke="#d6d6dc" stroke-width="1"/><ellipse cx="30" cy="12" rx="23" ry="5" fill="#dcdce2" stroke="#c9c9d0" stroke-width="1"/><path d="M14 8L20 2L28 6L34 1L40 6L46 4L48 10L30 14Z" fill="#c9c9cf"/><path d="M22 5L26 3L28 8ZM36 4L40 7L35 9Z" fill="#e04a3a"/><path d="M30 4L33 8L28 9Z" fill="#4a90e2"/></svg></div></div>
</body></html>
